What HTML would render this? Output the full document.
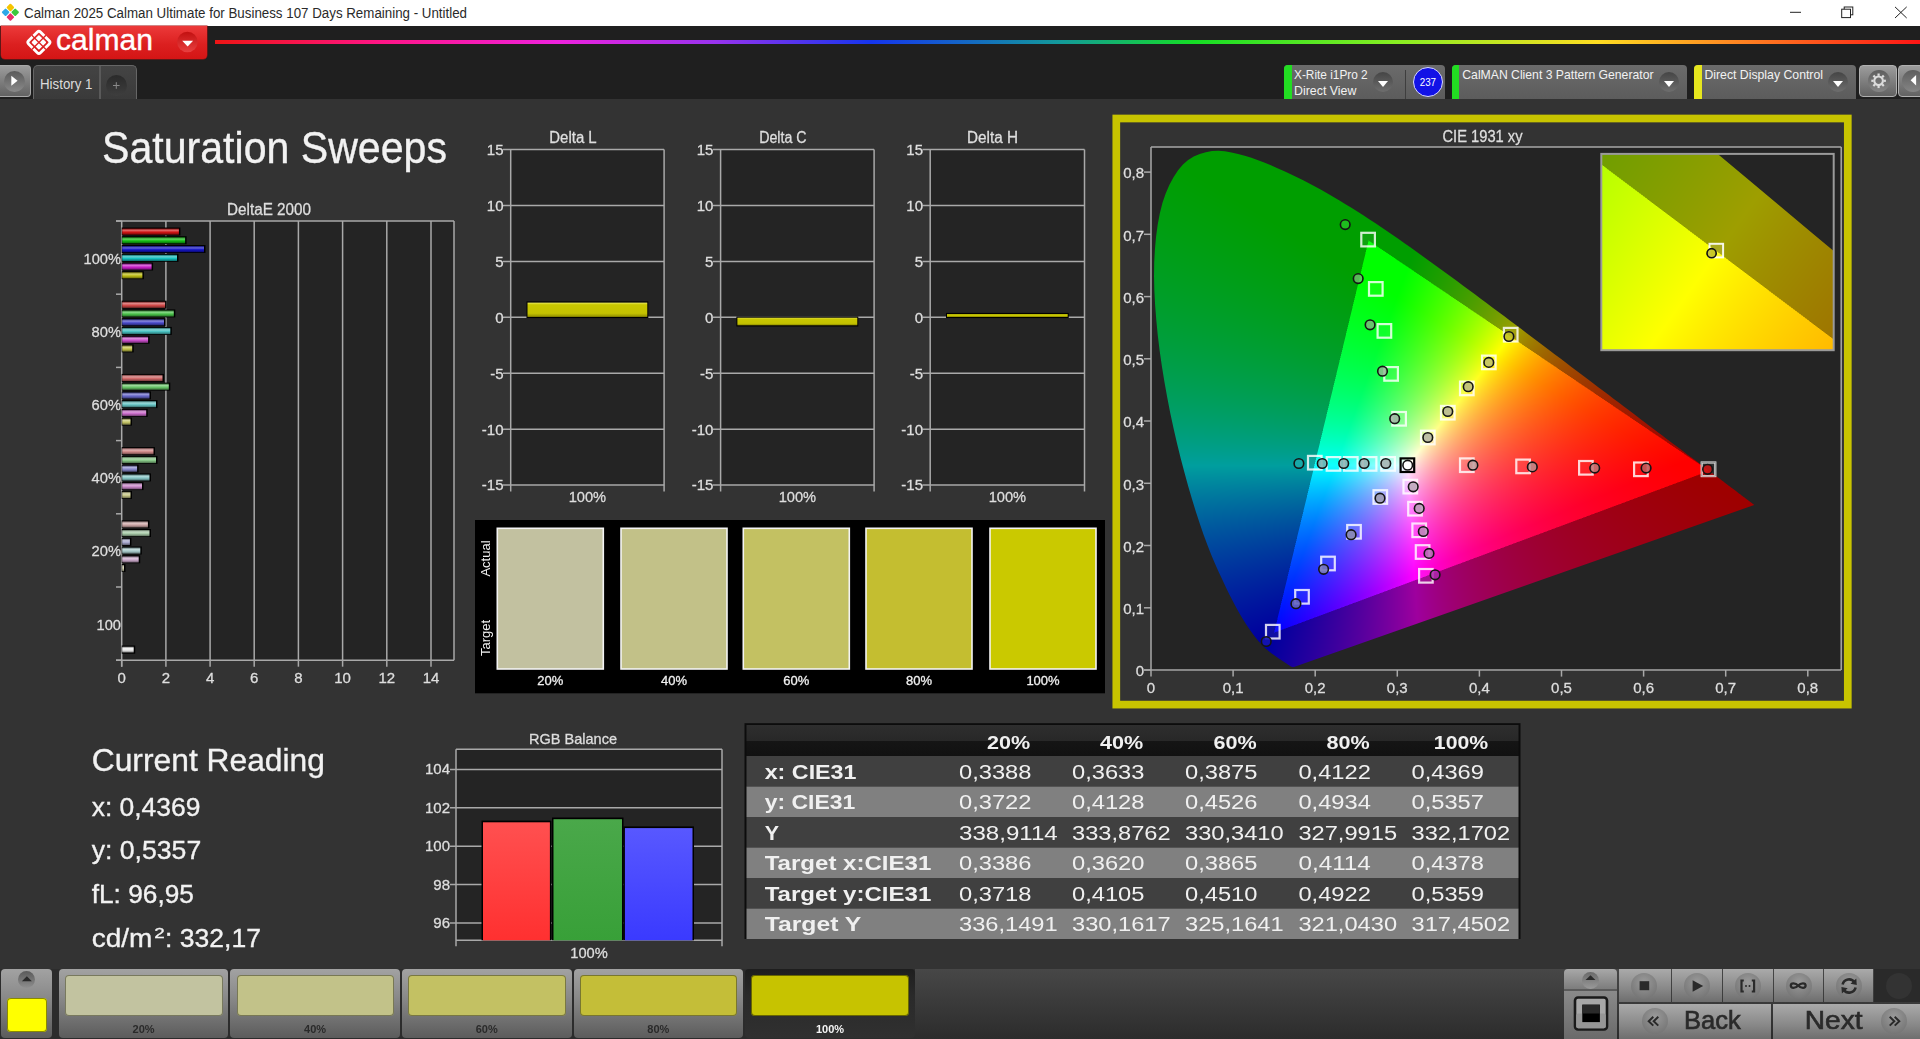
<!DOCTYPE html>
<html><head><meta charset="utf-8"><title>Calman</title>
<style>
*{margin:0;padding:0;box-sizing:border-box}
html,body{width:1920px;height:1039px;overflow:hidden;background:#333333;font-family:"Liberation Sans", sans-serif}
.a{position:absolute}
#title{left:0;top:0;width:1920px;height:25.5px;background:#fff}
#hdr{left:0;top:25.5px;width:1920px;height:73.5px;background:#1f1f1f}
#main{left:0;top:99px;width:1920px;height:870px;background:#333333}
svg text{font-family:"Liberation Sans", sans-serif}
.btn{background:linear-gradient(#9c9c9c,#626262);border-radius:4px}
.dd{position:absolute;width:20px;height:20px;border-radius:50%;background:linear-gradient(#454545,#6e6e6e)}
.dd:after{content:"";position:absolute;left:4.8px;top:8.5px;border-left:5.2px solid transparent;border-right:5.2px solid transparent;border-top:6px solid #fff}
.dev{position:absolute;top:65px;height:34px;border-radius:4px 4px 0 0;background:linear-gradient(#6b6b6b,#5c5c5c)}
.bar{position:absolute;left:0;top:0;width:8px;height:34px;border-radius:4px 0 0 0}
.devt{position:absolute;color:#f0f0f0;font-size:13px;white-space:nowrap;transform-origin:0 0}
.tb{position:absolute;top:969px;height:68.5px;border-radius:4px;background:linear-gradient(#a2a2a2 0%,#8a8a8a 40%,#5c5c5c 100%)}
.tsw{position:absolute;left:6.3px;top:6px;width:157.5px;height:40.6px;border-radius:4px;box-shadow:inset 0 0 0 1px rgba(60,60,40,0.55)}
.tl{position:absolute;left:0;width:100%;top:53.5px;text-align:center;font-size:11px;font-weight:bold;color:#2a2a2a}
.rb{position:absolute;background:linear-gradient(#aaaaaa,#888888 60%,#6e6e6e);}
.rc{position:absolute;width:26px;height:26px;border-radius:50%;background:radial-gradient(circle at 50% 35%,#9a9a9a,#7a7a7a 70%,#6a6a6a)}
</style></head><body>
<div id="title" class="a">
 <svg class="a" style="left:0;top:0" width="300" height="25">
<rect x="7.5" y="4.6" width="5.8" height="5.8" rx="1" transform="rotate(45 10.4 7.5)" fill="#f5c400"/>
  <rect x="2.7" y="9.4" width="5.8" height="5.8" rx="1" transform="rotate(45 5.6 12.3)" fill="#2fa8e8"/>
  <rect x="12.3" y="9.4" width="5.8" height="5.8" rx="1" transform="rotate(45 15.2 12.3)" fill="#3cc83c"/>
  <rect x="7.5" y="14.2" width="5.8" height="5.8" rx="1" transform="rotate(45 10.4 17.1)" fill="#e8306a"/>
 </svg>
 <svg class="a" style="left:0;top:0" width="600" height="25"><text x="24" y="17.7" font-size="13.8" fill="#2a2a2a" textLength="443" lengthAdjust="spacingAndGlyphs">Calman 2025 Calman Ultimate for Business 107 Days Remaining  - Untitled</text></svg>
 <svg class="a" style="left:1780px;top:0" width="140" height="25">
  <line x1="10" y1="12.3" x2="21" y2="12.3" stroke="#222" stroke-width="1"/>
  <rect x="64.2" y="7" width="8.6" height="7.8" fill="none" stroke="#222" stroke-width="1"/>
  <rect x="61.7" y="9.2" width="8.8" height="8.4" fill="#fff" stroke="#222" stroke-width="1"/>
  <line x1="115" y1="6.9" x2="126.7" y2="18" stroke="#222" stroke-width="1"/>
  <line x1="126.7" y1="6.9" x2="115" y2="18" stroke="#222" stroke-width="1"/>
 </svg>
</div>
<div id="hdr" class="a">
 <div class="a" style="left:1px;top:0.5px;width:206px;height:33px;border-radius:0 0 4px 4px;background:linear-gradient(#ec3a3a,#dc2020 55%,#d41515);box-shadow:0 0 0 0.5px #a01010"></div>
 <svg class="a" style="left:0;top:0" width="215" height="40">
  <g transform="translate(38.9 16.35) rotate(45)">
   <rect x="-8.4" y="-8.4" width="16.8" height="16.8" rx="2.2" fill="none" stroke="#fff" stroke-width="2.8"/>
   <rect x="-5.3" y="-5.3" width="10.6" height="10.6" rx="0.8" fill="#fff"/>
   <line x1="0" y1="-10" x2="0" y2="10" stroke="#dc2222" stroke-width="1.3"/>
   <line x1="-10" y1="0" x2="10" y2="0" stroke="#dc2222" stroke-width="1.3"/>
  </g>
  <text x="56" y="24" font-size="29" fill="#fff" stroke="#fff" stroke-width="0.35" textLength="97" lengthAdjust="spacingAndGlyphs">calman</text>
  <defs><linearGradient id="ddr" x1="0" y1="0" x2="0" y2="1"><stop offset="0" stop-color="#c21010"/><stop offset="1" stop-color="#e84040"/></linearGradient></defs>
  <circle cx="187.4" cy="16" r="10.3" fill="url(#ddr)"/>
  <path d="M182.2 14.8 L193.1 14.8 L187.65 20.5 Z" fill="#fff"/>
 </svg>
 <div class="a" style="left:215px;top:14.5px;width:1705px;height:4px;background:linear-gradient(90deg,#ee1515 0%,#ff1585 9.6%,#ee22dd 20.1%,#9933ee 29.3%,#1535ee 38.5%,#139a9a 49.6%,#15dd25 57.4%,#88ee22 69.3%,#ffdd22 81.1%,#ff8822 89%,#ff1515 100%)"></div>
 <!-- tabs -->
 <div class="a btn" style="left:0;top:39.5px;width:30.6px;height:32px;border:1px solid #a8a8a8;border-left:none;border-radius:0 4px 4px 0"></div>
 <div class="a" style="left:3.8px;top:45px;width:21.2px;height:21.2px;border-radius:50%;background:linear-gradient(#5a5a5a,#8a8a8a)"></div>
 <svg class="a" style="left:0;top:39.5px" width="30" height="32"><path d="M11.3 10.8 L11.3 20.8 L17.6 15.8 Z" fill="#fff"/></svg>
 <div class="a" style="left:33px;top:39.5px;width:104px;height:34px;border-radius:5px 5px 0 0;background:linear-gradient(#444,#3a3a3a);border:1.5px solid #666;border-bottom:none"></div>
 <div class="a" style="left:98.6px;top:40px;width:2px;height:33.5px;background:#5a5a5a"></div>
 <div class="a" style="left:105.6px;top:49px;width:21.2px;height:21.2px;border-radius:50%;background:linear-gradient(#2a2a2a,#3e3e3e)"></div>
 <svg class="a" style="left:0;top:0" width="140" height="74">
  <text x="40" y="62.6" font-size="14.5" fill="#dcdcdc" textLength="52.5" lengthAdjust="spacingAndGlyphs">History 1</text>
  <line x1="113" y1="59.5" x2="119.6" y2="59.5" stroke="#8a8a8a" stroke-width="1"/>
  <line x1="116.3" y1="56.2" x2="116.3" y2="62.8" stroke="#8a8a8a" stroke-width="1"/>
 </svg>
 <!-- device boxes -->
 <div class="dev" style="left:1283.8px;width:161.2px;top:39.5px"><div class="bar" style="background:#22dd22"></div></div>
 <div class="a" style="left:1404.5px;top:44px;width:1.5px;height:29.5px;background:#3e3e3e"></div>
 <div class="dd" style="left:1372.8px;top:46.5px"></div>
 <div class="a" style="left:1412.9px;top:41.1px;width:30px;height:30px;border-radius:50%;background:#1212e6;border:1.5px solid #d8d8ff"></div>
 <div class="dev" style="left:1451.8px;width:235px;top:39.5px"><div class="bar" style="background:#22dd22;width:7.4px"></div></div>
 <div class="dd" style="left:1659.1px;top:46.8px"></div>
 <div class="dev" style="left:1694.2px;width:162px;top:39.5px"><div class="bar" style="background:#e6e61e;width:7.4px"></div></div>
 <div class="dd" style="left:1828px;top:46.8px"></div>
 <svg class="a" style="left:0;top:0" width="1920" height="74">
 </svg>
 <svg class="a" style="left:1280px;top:0" width="640" height="74">
  <text x="14" y="52.8" font-size="13" fill="#f2f2f2" textLength="73.7" lengthAdjust="spacingAndGlyphs">X-Rite i1Pro 2</text>
  <text x="14" y="69.2" font-size="13" fill="#f2f2f2" textLength="62.4" lengthAdjust="spacingAndGlyphs">Direct View</text>
  <text x="147.9" y="60.3" font-size="10.5" fill="#fff" text-anchor="middle" textLength="16.4" lengthAdjust="spacingAndGlyphs">237</text>
  <text x="182.3" y="52.8" font-size="13" fill="#f2f2f2" textLength="191.2" lengthAdjust="spacingAndGlyphs">CalMAN Client 3 Pattern Generator</text>
  <text x="424.4" y="52.8" font-size="13" fill="#f2f2f2" textLength="118.6" lengthAdjust="spacingAndGlyphs">Direct Display Control</text>
 </svg>
 <div class="a btn" style="left:1859px;top:39.7px;width:38px;height:32px;border:1px solid #b0b0b0"></div>
 <div class="a btn" style="left:1898px;top:39.7px;width:30px;height:32px;border:1px solid #b0b0b0"></div>
 <div class="a" style="left:1867.6px;top:44.3px;width:22px;height:22px;border-radius:50%;background:linear-gradient(#5e5e5e,#858585)"></div>
 <div class="a" style="left:1901.5px;top:44.3px;width:22px;height:22px;border-radius:50%;background:linear-gradient(#5e5e5e,#858585)"></div>
 <svg class="a" style="left:1860px;top:39.5px" width="60" height="34">
  <g transform="translate(18.6 15.8)" fill="none" stroke="#dcdcdc">
   <circle r="4.3" stroke-width="2.1"/>
   <g stroke-width="2.2" stroke-linecap="butt">
    <line x1="0" y1="-7.3" x2="0" y2="-5"/><line x1="0" y1="7.3" x2="0" y2="5"/>
    <line x1="-7.3" y1="0" x2="-5" y2="0"/><line x1="7.3" y1="0" x2="5" y2="0"/>
    <line x1="-5.2" y1="-5.2" x2="-3.5" y2="-3.5"/><line x1="5.2" y1="5.2" x2="3.5" y2="3.5"/>
    <line x1="-5.2" y1="5.2" x2="-3.5" y2="3.5"/><line x1="5.2" y1="-5.2" x2="3.5" y2="-3.5"/>
   </g>
  </g>
  <path d="M50.6 15.2 L56.1 9.9 L56.1 20.5 Z" fill="#fff"/>
 </svg>
</div>
<div id="main" class="a"></div>
<svg class="a" style="left:0;top:0" width="1920" height="1039">
<defs>
<linearGradient id="hsg" gradientUnits="userSpaceOnUse" x1="0" y1="153.4" x2="0" y2="670.0"><stop offset="0" stop-color="#009400"/><stop offset="0.45" stop-color="#00904a"/><stop offset="0.6" stop-color="#008c8c"/><stop offset="0.8" stop-color="#00409a"/><stop offset="1" stop-color="#1000a0"/></linearGradient>
<linearGradient id="fr" gradientUnits="userSpaceOnUse" x1="1709.3" y1="470.8" x2="1334.8" y2="380.7"><stop offset="0" stop-color="#ff0000"/><stop offset="0.62" stop-color="#ff0000"/><stop offset="1" stop-color="#000"/></linearGradient>
<linearGradient id="fg" gradientUnits="userSpaceOnUse" x1="1368.6" y1="240.5" x2="1485.2" y2="554.2"><stop offset="0" stop-color="#00ff00"/><stop offset="0.62" stop-color="#00ff00"/><stop offset="1" stop-color="#000"/></linearGradient>
<linearGradient id="fb" gradientUnits="userSpaceOnUse" x1="1274.2" y1="632.7" x2="1485.7" y2="319.7"><stop offset="0" stop-color="#0000ff"/><stop offset="0.62" stop-color="#0000ff"/><stop offset="1" stop-color="#000"/></linearGradient>
</defs>
<polygon points="1293.9,666.9 1293.9,666.9 1293.9,666.9 1293.9,666.9 1293.9,666.9 1293.9,666.9 1293.8,666.9 1293.8,666.9 1293.8,666.9 1293.7,666.9 1293.7,667.0 1293.7,667.0 1293.6,667.0 1293.6,666.9 1293.6,666.9 1293.5,667.0 1293.5,667.0 1293.4,667.0 1293.4,667.0 1293.3,667.0 1293.3,667.0 1293.2,667.0 1293.2,667.0 1293.1,667.0 1293.1,667.0 1293.0,667.0 1293.0,667.0 1292.9,667.0 1292.8,667.0 1292.8,667.0 1292.7,667.0 1292.6,667.0 1292.6,667.0 1292.5,667.0 1292.4,667.0 1292.3,667.0 1292.2,667.0 1292.1,667.0 1292.0,666.9 1291.9,666.9 1291.7,666.8 1291.6,666.8 1291.4,666.7 1291.2,666.6 1291.0,666.5 1290.8,666.4 1290.6,666.3 1290.4,666.2 1290.2,666.0 1289.9,665.9 1289.7,665.7 1289.4,665.5 1289.1,665.3 1288.7,665.1 1288.4,664.9 1288.0,664.6 1287.7,664.4 1287.3,664.1 1286.9,663.8 1286.4,663.5 1286.0,663.2 1285.5,662.9 1285.0,662.6 1284.4,662.2 1283.9,661.8 1283.3,661.4 1282.6,661.0 1281.9,660.5 1281.2,660.0 1280.4,659.5 1279.6,659.0 1278.7,658.4 1277.8,657.8 1276.9,657.2 1276.0,656.6 1275.0,655.9 1273.9,655.1 1272.8,654.3 1271.7,653.5 1270.5,652.5 1269.2,651.5 1267.9,650.4 1266.6,649.3 1265.3,648.1 1263.8,646.8 1262.2,645.2 1260.6,643.4 1258.8,641.4 1256.9,639.2 1255.0,636.8 1252.9,634.0 1250.7,631.0 1248.5,627.8 1246.1,624.3 1243.6,620.4 1241.0,616.0 1238.2,611.2 1235.4,606.0 1232.4,600.3 1229.2,594.2 1226.0,587.4 1222.5,580.1 1218.8,572.3 1215.0,563.9 1211.2,554.8 1207.4,545.1 1203.6,534.6 1199.7,523.5 1195.9,511.7 1192.0,499.3 1188.3,486.4 1184.5,472.8 1180.7,458.4 1177.0,443.5 1173.5,428.3 1170.3,413.1 1167.3,397.7 1164.4,381.9 1161.8,366.0 1159.6,350.3 1157.7,334.9 1156.3,319.8 1155.1,304.9 1154.3,290.2 1154.0,276.0 1154.2,262.5 1154.9,249.4 1156.0,236.8 1157.7,224.7 1159.8,213.4 1162.4,203.1 1165.6,193.6 1169.3,185.0 1173.5,177.2 1178.1,170.4 1182.9,164.6 1188.1,160.0 1193.8,156.5 1199.7,154.0 1205.8,152.2 1212.0,151.0 1218.3,150.7 1224.8,151.2 1231.4,152.4 1238.1,154.0 1244.8,155.8 1251.4,157.8 1258.1,160.1 1264.8,162.8 1271.5,165.6 1278.0,168.4 1284.4,171.2 1290.7,174.2 1297.0,177.2 1303.2,180.3 1309.4,183.5 1315.5,186.8 1321.5,190.1 1327.5,193.5 1333.5,197.0 1339.5,200.5 1345.5,204.1 1351.4,207.8 1357.4,211.6 1363.3,215.4 1369.2,219.2 1375.1,223.1 1381.0,227.0 1386.9,231.0 1392.7,235.1 1398.6,239.1 1404.5,243.2 1410.3,247.3 1416.2,251.5 1422.1,255.7 1427.9,259.9 1433.8,264.1 1439.7,268.4 1445.6,272.7 1451.4,277.0 1457.3,281.3 1463.2,285.6 1469.0,290.0 1474.9,294.3 1480.7,298.7 1486.5,303.0 1492.4,307.4 1498.2,311.7 1504.0,316.1 1509.8,320.4 1515.6,324.8 1521.4,329.1 1527.1,333.4 1532.8,337.7 1538.5,342.0 1544.1,346.2 1549.7,350.5 1555.3,354.7 1560.8,358.9 1566.3,363.0 1571.8,367.1 1577.2,371.2 1582.5,375.3 1587.8,379.3 1593.1,383.3 1598.3,387.2 1603.4,391.0 1608.5,394.9 1613.5,398.6 1618.4,402.3 1623.2,406.0 1628.0,409.6 1632.6,413.1 1637.2,416.6 1641.7,419.9 1646.0,423.2 1650.2,426.4 1654.2,429.4 1658.2,432.4 1662.0,435.3 1665.8,438.2 1669.4,440.9 1673.0,443.6 1676.5,446.3 1679.9,448.8 1683.2,451.3 1686.3,453.6 1689.3,455.9 1692.2,458.0 1695.0,460.1 1697.6,462.1 1700.2,464.1 1702.6,465.9 1705.0,467.7 1707.2,469.4 1709.4,471.0 1711.4,472.6 1713.4,474.1 1715.2,475.5 1717.0,476.8 1718.7,478.1 1720.4,479.3 1721.9,480.5 1723.4,481.6 1724.8,482.7 1726.2,483.7 1727.5,484.7 1728.7,485.6 1729.9,486.5 1731.1,487.4 1732.2,488.3 1733.3,489.1 1734.3,489.9 1735.3,490.6 1736.3,491.4 1737.2,492.1 1738.1,492.7 1738.9,493.4 1739.8,494.0 1740.5,494.6 1741.3,495.2 1742.0,495.7 1742.7,496.2 1743.4,496.7 1744.0,497.2 1744.6,497.6 1745.1,498.0 1745.7,498.4 1746.1,498.8 1746.6,499.1 1747.0,499.5 1747.5,499.8 1747.9,500.1 1748.2,500.4 1748.6,500.6 1748.9,500.9 1749.3,501.1 1749.6,501.4 1749.8,501.6 1750.1,501.8 1750.3,502.0 1750.5,502.1 1750.7,502.3 1750.9,502.4 1751.1,502.5 1751.2,502.6 1751.4,502.8 1751.5,502.9 1751.7,503.0 1751.8,503.1 1752.0,503.2 1752.1,503.3 1752.2,503.4 1752.3,503.5 1752.4,503.5 1752.5,503.6 1752.7,503.7 1752.8,503.8 1752.9,503.9 1753.0,504.0 1753.1,504.1 1753.2,504.1 1753.3,504.2 1753.4,504.3 1753.5,504.4 1753.6,504.4 1753.7,504.5 1753.8,504.6 1753.8,504.6 1753.9,504.7 1753.9,504.7 1754.0,504.7 1754.0,504.8 1754.1,504.8 1754.1,504.8 1754.1,504.8 1754.1,504.8 1754.1,504.8 1754.2,504.9 1754.2,504.9 1754.2,504.9" fill="url(#hsg)"/>
<linearGradient id="tng" gradientUnits="userSpaceOnUse" x1="1274.2" y1="0" x2="1754.2" y2="0"><stop offset="0" stop-color="#1a009a"/><stop offset="0.45" stop-color="#6a0090"/><stop offset="1" stop-color="#9a0010"/></linearGradient>
<linearGradient id="bdg" gradientUnits="userSpaceOnUse" x1="1368.6" y1="0" x2="1709.3" y2="0"><stop offset="0" stop-color="#10a000"/><stop offset="0.5" stop-color="#8a9a00"/><stop offset="1" stop-color="#9a2000"/></linearGradient>
<polygon points="1293.9,666.9 1274.2,632.7 1709.3,470.8 1754.2,504.9" fill="url(#tng)"/>
<polygon points="1369.2,219.2 1375.1,223.1 1381.0,227.0 1386.9,231.0 1392.7,235.1 1398.6,239.1 1404.5,243.2 1410.3,247.3 1416.2,251.5 1422.1,255.7 1427.9,259.9 1433.8,264.1 1439.7,268.4 1445.6,272.7 1451.4,277.0 1457.3,281.3 1463.2,285.6 1469.0,290.0 1474.9,294.3 1480.7,298.7 1486.5,303.0 1492.4,307.4 1498.2,311.7 1504.0,316.1 1509.8,320.4 1515.6,324.8 1521.4,329.1 1527.1,333.4 1532.8,337.7 1538.5,342.0 1544.1,346.2 1549.7,350.5 1555.3,354.7 1560.8,358.9 1566.3,363.0 1571.8,367.1 1577.2,371.2 1582.5,375.3 1587.8,379.3 1593.1,383.3 1598.3,387.2 1603.4,391.0 1608.5,394.9 1613.5,398.6 1618.4,402.3 1623.2,406.0 1628.0,409.6 1632.6,413.1 1637.2,416.6 1641.7,419.9 1646.0,423.2 1650.2,426.4 1654.2,429.4 1658.2,432.4 1662.0,435.3 1665.8,438.2 1669.4,440.9 1673.0,443.6 1676.5,446.3 1679.9,448.8 1683.2,451.3 1686.3,453.6 1689.3,455.9 1692.2,458.0 1695.0,460.1 1697.6,462.1 1700.2,464.1 1702.6,465.9 1705.0,467.7 1707.2,469.4 1709.4,471.0 1711.4,472.6 1713.4,474.1 1715.2,475.5 1717.0,476.8 1718.7,478.1 1720.4,479.3 1721.9,480.5 1723.4,481.6 1724.8,482.7 1726.2,483.7 1727.5,484.7 1728.7,485.6 1729.9,486.5 1731.1,487.4 1732.2,488.3 1733.3,489.1 1734.3,489.9 1735.3,490.6 1736.3,491.4 1737.2,492.1 1738.1,492.7 1738.9,493.4 1739.8,494.0 1740.5,494.6 1741.3,495.2 1742.0,495.7 1742.7,496.2 1743.4,496.7 1744.0,497.2 1744.6,497.6 1745.1,498.0 1745.7,498.4 1746.1,498.8 1746.6,499.1 1747.0,499.5 1747.5,499.8 1747.9,500.1 1748.2,500.4 1748.6,500.6 1748.9,500.9 1749.3,501.1 1749.6,501.4 1749.8,501.6 1750.1,501.8 1750.3,502.0 1750.5,502.1 1750.7,502.3 1750.9,502.4 1751.1,502.5 1751.2,502.6 1751.4,502.8 1751.5,502.9 1751.7,503.0 1751.8,503.1 1752.0,503.2 1752.1,503.3 1752.2,503.4 1752.3,503.5 1752.4,503.5 1752.5,503.6 1752.7,503.7 1752.8,503.8 1752.9,503.9 1753.0,504.0 1753.1,504.1 1753.2,504.1 1753.3,504.2 1753.4,504.3 1753.5,504.4 1753.6,504.4 1753.7,504.5 1753.8,504.6 1753.8,504.6 1753.9,504.7 1753.9,504.7 1754.0,504.7 1754.0,504.8 1754.1,504.8 1754.1,504.8 1754.1,504.8 1754.1,504.8 1754.1,504.8 1754.2,504.9 1754.2,504.9 1754.2,504.9 1709.3,470.8 1368.6,240.5" fill="url(#bdg)"/>
<g style="isolation:isolate"><polygon points="1709.3,470.8 1368.6,240.5 1274.2,632.7" fill="#000"/>
<polygon points="1709.3,470.8 1368.6,240.5 1274.2,632.7" fill="url(#fr)" style="mix-blend-mode:screen"/>
<polygon points="1709.3,470.8 1368.6,240.5 1274.2,632.7" fill="url(#fg)" style="mix-blend-mode:screen"/>
<polygon points="1709.3,470.8 1368.6,240.5 1274.2,632.7" fill="url(#fb)" style="mix-blend-mode:screen"/>
</g>
<linearGradient id="ibd" x1="0" y1="0" x2="1" y2="1"><stop offset="0" stop-color="#5a9200"/><stop offset="1" stop-color="#8a6a00"/></linearGradient>
<linearGradient id="iin" x1="0" y1="0" x2="1" y2="1"><stop offset="0" stop-color="#b8ff00"/><stop offset="0.45" stop-color="#ffff00"/><stop offset="1" stop-color="#ffb400"/></linearGradient>
<rect x="1601" y="154" width="233" height="197" fill="#242424"/>
<polygon points="1601.3,154 1717.5,154 1834,251.3 1834,339.2 1601.3,164.1" fill="url(#ibd)"/>
<polygon points="1601.3,164.1 1834,339.2 1834,350.2 1601.3,350.2" fill="url(#iin)"/>
</svg>
<canvas id="cie" class="a" width="691" height="524" style="left:1151px;top:147px;width:691px;height:524px"></canvas>
<canvas id="ins" class="a" width="233" height="197" style="left:1601px;top:154px;width:233px;height:197px"></canvas>
<svg class="a" style="left:0;top:0" width="1920" height="1039">
<defs><linearGradient id="bg1" x1="0" y1="0" x2="0" y2="1"><stop offset="0" stop-color="rgb(116, 11, 11)"/><stop offset="0.3" stop-color="rgb(226, 102, 102)"/><stop offset="0.6" stop-color="rgb(210, 20, 20)"/><stop offset="1" stop-color="rgb(116, 11, 11)"/></linearGradient><linearGradient id="bg2" x1="0" y1="0" x2="0" y2="1"><stop offset="0" stop-color="rgb(11, 105, 11)"/><stop offset="0.3" stop-color="rgb(102, 213, 102)"/><stop offset="0.6" stop-color="rgb(20, 190, 20)"/><stop offset="1" stop-color="rgb(11, 105, 11)"/></linearGradient><linearGradient id="bg3" x1="0" y1="0" x2="0" y2="1"><stop offset="0" stop-color="rgb(11, 11, 110)"/><stop offset="0.3" stop-color="rgb(102, 102, 219)"/><stop offset="0.6" stop-color="rgb(20, 20, 200)"/><stop offset="1" stop-color="rgb(11, 11, 110)"/></linearGradient><linearGradient id="bg4" x1="0" y1="0" x2="0" y2="1"><stop offset="0" stop-color="rgb(11, 105, 105)"/><stop offset="0.3" stop-color="rgb(102, 213, 213)"/><stop offset="0.6" stop-color="rgb(20, 190, 190)"/><stop offset="1" stop-color="rgb(11, 105, 105)"/></linearGradient><linearGradient id="bg5" x1="0" y1="0" x2="0" y2="1"><stop offset="0" stop-color="rgb(110, 16, 110)"/><stop offset="0.3" stop-color="rgb(219, 109, 219)"/><stop offset="0.6" stop-color="rgb(200, 30, 200)"/><stop offset="1" stop-color="rgb(110, 16, 110)"/></linearGradient><linearGradient id="bg6" x1="0" y1="0" x2="0" y2="1"><stop offset="0" stop-color="rgb(105, 105, 11)"/><stop offset="0.3" stop-color="rgb(213, 213, 102)"/><stop offset="0.6" stop-color="rgb(190, 190, 20)"/><stop offset="1" stop-color="rgb(105, 105, 11)"/></linearGradient><linearGradient id="bg7" x1="0" y1="0" x2="0" y2="1"><stop offset="0" stop-color="rgb(115, 40, 40)"/><stop offset="0.3" stop-color="rgb(225, 136, 136)"/><stop offset="0.6" stop-color="rgb(209, 72, 72)"/><stop offset="1" stop-color="rgb(115, 40, 40)"/></linearGradient><linearGradient id="bg8" x1="0" y1="0" x2="0" y2="1"><stop offset="0" stop-color="rgb(40, 107, 40)"/><stop offset="0.3" stop-color="rgb(136, 215, 136)"/><stop offset="0.6" stop-color="rgb(72, 194, 72)"/><stop offset="1" stop-color="rgb(40, 107, 40)"/></linearGradient><linearGradient id="bg9" x1="0" y1="0" x2="0" y2="1"><stop offset="0" stop-color="rgb(40, 40, 111)"/><stop offset="0.3" stop-color="rgb(136, 136, 220)"/><stop offset="0.6" stop-color="rgb(72, 72, 201)"/><stop offset="1" stop-color="rgb(40, 40, 111)"/></linearGradient><linearGradient id="bg10" x1="0" y1="0" x2="0" y2="1"><stop offset="0" stop-color="rgb(40, 107, 107)"/><stop offset="0.3" stop-color="rgb(136, 215, 215)"/><stop offset="0.6" stop-color="rgb(72, 194, 194)"/><stop offset="1" stop-color="rgb(40, 107, 107)"/></linearGradient><linearGradient id="bg11" x1="0" y1="0" x2="0" y2="1"><stop offset="0" stop-color="rgb(111, 43, 111)"/><stop offset="0.3" stop-color="rgb(220, 141, 220)"/><stop offset="0.6" stop-color="rgb(201, 79, 201)"/><stop offset="1" stop-color="rgb(111, 43, 111)"/></linearGradient><linearGradient id="bg12" x1="0" y1="0" x2="0" y2="1"><stop offset="0" stop-color="rgb(107, 107, 40)"/><stop offset="0.3" stop-color="rgb(215, 215, 136)"/><stop offset="0.6" stop-color="rgb(194, 194, 72)"/><stop offset="1" stop-color="rgb(107, 107, 40)"/></linearGradient><linearGradient id="bg13" x1="0" y1="0" x2="0" y2="1"><stop offset="0" stop-color="rgb(114, 57, 57)"/><stop offset="0.3" stop-color="rgb(224, 156, 156)"/><stop offset="0.6" stop-color="rgb(208, 103, 103)"/><stop offset="1" stop-color="rgb(114, 57, 57)"/></linearGradient><linearGradient id="bg14" x1="0" y1="0" x2="0" y2="1"><stop offset="0" stop-color="rgb(57, 108, 57)"/><stop offset="0.3" stop-color="rgb(156, 217, 156)"/><stop offset="0.6" stop-color="rgb(103, 197, 103)"/><stop offset="1" stop-color="rgb(57, 108, 57)"/></linearGradient><linearGradient id="bg15" x1="0" y1="0" x2="0" y2="1"><stop offset="0" stop-color="rgb(57, 57, 111)"/><stop offset="0.3" stop-color="rgb(156, 156, 221)"/><stop offset="0.6" stop-color="rgb(103, 103, 202)"/><stop offset="1" stop-color="rgb(57, 57, 111)"/></linearGradient><linearGradient id="bg16" x1="0" y1="0" x2="0" y2="1"><stop offset="0" stop-color="rgb(57, 108, 108)"/><stop offset="0.3" stop-color="rgb(156, 217, 217)"/><stop offset="0.6" stop-color="rgb(103, 197, 197)"/><stop offset="1" stop-color="rgb(57, 108, 108)"/></linearGradient><linearGradient id="bg17" x1="0" y1="0" x2="0" y2="1"><stop offset="0" stop-color="rgb(111, 60, 111)"/><stop offset="0.3" stop-color="rgb(221, 160, 221)"/><stop offset="0.6" stop-color="rgb(202, 109, 202)"/><stop offset="1" stop-color="rgb(111, 60, 111)"/></linearGradient><linearGradient id="bg18" x1="0" y1="0" x2="0" y2="1"><stop offset="0" stop-color="rgb(108, 108, 57)"/><stop offset="0.3" stop-color="rgb(217, 217, 156)"/><stop offset="0.6" stop-color="rgb(197, 197, 103)"/><stop offset="1" stop-color="rgb(108, 108, 57)"/></linearGradient><linearGradient id="bg19" x1="0" y1="0" x2="0" y2="1"><stop offset="0" stop-color="rgb(114, 74, 74)"/><stop offset="0.3" stop-color="rgb(224, 177, 177)"/><stop offset="0.6" stop-color="rgb(207, 135, 135)"/><stop offset="1" stop-color="rgb(114, 74, 74)"/></linearGradient><linearGradient id="bg20" x1="0" y1="0" x2="0" y2="1"><stop offset="0" stop-color="rgb(74, 109, 74)"/><stop offset="0.3" stop-color="rgb(177, 219, 177)"/><stop offset="0.6" stop-color="rgb(135, 199, 135)"/><stop offset="1" stop-color="rgb(74, 109, 74)"/></linearGradient><linearGradient id="bg21" x1="0" y1="0" x2="0" y2="1"><stop offset="0" stop-color="rgb(74, 74, 112)"/><stop offset="0.3" stop-color="rgb(177, 177, 221)"/><stop offset="0.6" stop-color="rgb(135, 135, 203)"/><stop offset="1" stop-color="rgb(74, 74, 112)"/></linearGradient><linearGradient id="bg22" x1="0" y1="0" x2="0" y2="1"><stop offset="0" stop-color="rgb(74, 109, 109)"/><stop offset="0.3" stop-color="rgb(177, 219, 219)"/><stop offset="0.6" stop-color="rgb(135, 199, 199)"/><stop offset="1" stop-color="rgb(74, 109, 109)"/></linearGradient><linearGradient id="bg23" x1="0" y1="0" x2="0" y2="1"><stop offset="0" stop-color="rgb(112, 76, 112)"/><stop offset="0.3" stop-color="rgb(221, 179, 221)"/><stop offset="0.6" stop-color="rgb(203, 138, 203)"/><stop offset="1" stop-color="rgb(112, 76, 112)"/></linearGradient><linearGradient id="bg24" x1="0" y1="0" x2="0" y2="1"><stop offset="0" stop-color="rgb(109, 109, 74)"/><stop offset="0.3" stop-color="rgb(219, 219, 177)"/><stop offset="0.6" stop-color="rgb(199, 199, 135)"/><stop offset="1" stop-color="rgb(109, 109, 74)"/></linearGradient><linearGradient id="bg25" x1="0" y1="0" x2="0" y2="1"><stop offset="0" stop-color="rgb(113, 92, 92)"/><stop offset="0.3" stop-color="rgb(223, 198, 198)"/><stop offset="0.6" stop-color="rgb(206, 168, 168)"/><stop offset="1" stop-color="rgb(113, 92, 92)"/></linearGradient><linearGradient id="bg26" x1="0" y1="0" x2="0" y2="1"><stop offset="0" stop-color="rgb(92, 111, 92)"/><stop offset="0.3" stop-color="rgb(198, 221, 198)"/><stop offset="0.6" stop-color="rgb(168, 202, 168)"/><stop offset="1" stop-color="rgb(92, 111, 92)"/></linearGradient><linearGradient id="bg27" x1="0" y1="0" x2="0" y2="1"><stop offset="0" stop-color="rgb(92, 92, 112)"/><stop offset="0.3" stop-color="rgb(198, 198, 222)"/><stop offset="0.6" stop-color="rgb(168, 168, 204)"/><stop offset="1" stop-color="rgb(92, 92, 112)"/></linearGradient><linearGradient id="bg28" x1="0" y1="0" x2="0" y2="1"><stop offset="0" stop-color="rgb(92, 111, 111)"/><stop offset="0.3" stop-color="rgb(198, 221, 221)"/><stop offset="0.6" stop-color="rgb(168, 202, 202)"/><stop offset="1" stop-color="rgb(92, 111, 111)"/></linearGradient><linearGradient id="bg29" x1="0" y1="0" x2="0" y2="1"><stop offset="0" stop-color="rgb(112, 94, 112)"/><stop offset="0.3" stop-color="rgb(222, 200, 222)"/><stop offset="0.6" stop-color="rgb(204, 170, 204)"/><stop offset="1" stop-color="rgb(112, 94, 112)"/></linearGradient><linearGradient id="bg30" x1="0" y1="0" x2="0" y2="1"><stop offset="0" stop-color="rgb(111, 111, 92)"/><stop offset="0.3" stop-color="rgb(221, 221, 198)"/><stop offset="0.6" stop-color="rgb(202, 202, 168)"/><stop offset="1" stop-color="rgb(111, 111, 92)"/></linearGradient><linearGradient id="bg31" x1="0" y1="0" x2="0" y2="1"><stop offset="0" stop-color="rgb(129, 129, 129)"/><stop offset="0.3" stop-color="rgb(242, 242, 242)"/><stop offset="0.6" stop-color="rgb(235, 235, 235)"/><stop offset="1" stop-color="rgb(129, 129, 129)"/></linearGradient><linearGradient id="ylg0" x1="0" y1="0" x2="0" y2="1"><stop offset="0" stop-color="#ecec60"/><stop offset="0.15" stop-color="#c9c700"/><stop offset="0.75" stop-color="#c4c200"/><stop offset="1" stop-color="#8e8c00"/></linearGradient><linearGradient id="ylg1" x1="0" y1="0" x2="0" y2="1"><stop offset="0" stop-color="#ecec60"/><stop offset="0.15" stop-color="#c9c700"/><stop offset="0.75" stop-color="#c4c200"/><stop offset="1" stop-color="#8e8c00"/></linearGradient><linearGradient id="ylg2" x1="0" y1="0" x2="0" y2="1"><stop offset="0" stop-color="#ecec60"/><stop offset="0.15" stop-color="#c9c700"/><stop offset="0.75" stop-color="#c4c200"/><stop offset="1" stop-color="#8e8c00"/></linearGradient><linearGradient id="rbr" x1="0" y1="0" x2="0" y2="1"><stop offset="0" stop-color="#ff5050"/><stop offset="1" stop-color="#ff3030"/></linearGradient><linearGradient id="rbg" x1="0" y1="0" x2="0" y2="1"><stop offset="0" stop-color="#4aa84a"/><stop offset="1" stop-color="#38a038"/></linearGradient><linearGradient id="rbb" x1="0" y1="0" x2="0" y2="1"><stop offset="0" stop-color="#5858ff"/><stop offset="1" stop-color="#3a3aff"/></linearGradient><linearGradient id="thg" x1="0" y1="0" x2="0" y2="1"><stop offset="0" stop-color="#2e2e2e"/><stop offset="0.5" stop-color="#282828"/><stop offset="0.5" stop-color="#151515"/><stop offset="1" stop-color="#111111"/></linearGradient></defs>
<text x="102.0" y="162.5" font-size="43.6" fill="#f2f2f2" textLength="345.0" lengthAdjust="spacingAndGlyphs" stroke="#f2f2f2" stroke-width="0.35">Saturation Sweeps</text>
<text x="269.0" y="215.0" font-size="16" fill="#dedede" text-anchor="middle" textLength="84.0" lengthAdjust="spacingAndGlyphs" stroke="#dedede" stroke-width="0.3">DeltaE 2000</text>
<rect x="121.7" y="221.0" width="332.3" height="439.2" fill="#242424"/>
<line x1="165.9" y1="221.0" x2="165.9" y2="660.2" stroke="#a9a9a9" stroke-width="1.5"/>
<line x1="210.1" y1="221.0" x2="210.1" y2="660.2" stroke="#a9a9a9" stroke-width="1.5"/>
<line x1="254.2" y1="221.0" x2="254.2" y2="660.2" stroke="#a9a9a9" stroke-width="1.5"/>
<line x1="298.4" y1="221.0" x2="298.4" y2="660.2" stroke="#a9a9a9" stroke-width="1.5"/>
<line x1="342.6" y1="221.0" x2="342.6" y2="660.2" stroke="#a9a9a9" stroke-width="1.5"/>
<line x1="386.8" y1="221.0" x2="386.8" y2="660.2" stroke="#a9a9a9" stroke-width="1.5"/>
<line x1="431.0" y1="221.0" x2="431.0" y2="660.2" stroke="#a9a9a9" stroke-width="1.5"/>
<line x1="116.0" y1="221.0" x2="454.0" y2="221.0" stroke="#a9a9a9" stroke-width="1.5"/>
<line x1="454.0" y1="221.0" x2="454.0" y2="660.2" stroke="#a9a9a9" stroke-width="1.5"/>
<line x1="121.7" y1="221.0" x2="121.7" y2="666.7" stroke="#a9a9a9" stroke-width="1.5"/>
<line x1="116.0" y1="660.2" x2="454.0" y2="660.2" stroke="#a9a9a9" stroke-width="1.5"/>
<line x1="116.0" y1="221.0" x2="121.7" y2="221.0" stroke="#a9a9a9" stroke-width="1.5"/>
<line x1="116.0" y1="294.2" x2="121.7" y2="294.2" stroke="#a9a9a9" stroke-width="1.5"/>
<line x1="116.0" y1="367.4" x2="121.7" y2="367.4" stroke="#a9a9a9" stroke-width="1.5"/>
<line x1="116.0" y1="440.6" x2="121.7" y2="440.6" stroke="#a9a9a9" stroke-width="1.5"/>
<line x1="116.0" y1="513.8" x2="121.7" y2="513.8" stroke="#a9a9a9" stroke-width="1.5"/>
<line x1="116.0" y1="587.0" x2="121.7" y2="587.0" stroke="#a9a9a9" stroke-width="1.5"/>
<line x1="116.0" y1="660.2" x2="121.7" y2="660.2" stroke="#a9a9a9" stroke-width="1.5"/>
<line x1="121.7" y1="660.2" x2="121.7" y2="666.7" stroke="#a9a9a9" stroke-width="1.5"/>
<text x="121.7" y="683.3" font-size="15" fill="#dedede" text-anchor="middle" stroke="#dedede" stroke-width="0.3">0</text>
<line x1="165.9" y1="660.2" x2="165.9" y2="666.7" stroke="#a9a9a9" stroke-width="1.5"/>
<text x="165.9" y="683.3" font-size="15" fill="#dedede" text-anchor="middle" stroke="#dedede" stroke-width="0.3">2</text>
<line x1="210.1" y1="660.2" x2="210.1" y2="666.7" stroke="#a9a9a9" stroke-width="1.5"/>
<text x="210.1" y="683.3" font-size="15" fill="#dedede" text-anchor="middle" stroke="#dedede" stroke-width="0.3">4</text>
<line x1="254.2" y1="660.2" x2="254.2" y2="666.7" stroke="#a9a9a9" stroke-width="1.5"/>
<text x="254.2" y="683.3" font-size="15" fill="#dedede" text-anchor="middle" stroke="#dedede" stroke-width="0.3">6</text>
<line x1="298.4" y1="660.2" x2="298.4" y2="666.7" stroke="#a9a9a9" stroke-width="1.5"/>
<text x="298.4" y="683.3" font-size="15" fill="#dedede" text-anchor="middle" stroke="#dedede" stroke-width="0.3">8</text>
<line x1="342.6" y1="660.2" x2="342.6" y2="666.7" stroke="#a9a9a9" stroke-width="1.5"/>
<text x="342.6" y="683.3" font-size="15" fill="#dedede" text-anchor="middle" stroke="#dedede" stroke-width="0.3">10</text>
<line x1="386.8" y1="660.2" x2="386.8" y2="666.7" stroke="#a9a9a9" stroke-width="1.5"/>
<text x="386.8" y="683.3" font-size="15" fill="#dedede" text-anchor="middle" stroke="#dedede" stroke-width="0.3">12</text>
<line x1="431.0" y1="660.2" x2="431.0" y2="666.7" stroke="#a9a9a9" stroke-width="1.5"/>
<text x="431.0" y="683.3" font-size="15" fill="#dedede" text-anchor="middle" stroke="#dedede" stroke-width="0.3">14</text>
<text x="121.0" y="263.6" font-size="15.5" fill="#dedede" text-anchor="end" textLength="37.5" lengthAdjust="spacingAndGlyphs" stroke="#dedede" stroke-width="0.3">100%</text>
<text x="121.0" y="336.8" font-size="15.5" fill="#dedede" text-anchor="end" textLength="29.5" lengthAdjust="spacingAndGlyphs" stroke="#dedede" stroke-width="0.3">80%</text>
<text x="121.0" y="410.0" font-size="15.5" fill="#dedede" text-anchor="end" textLength="29.5" lengthAdjust="spacingAndGlyphs" stroke="#dedede" stroke-width="0.3">60%</text>
<text x="121.0" y="483.2" font-size="15.5" fill="#dedede" text-anchor="end" textLength="29.5" lengthAdjust="spacingAndGlyphs" stroke="#dedede" stroke-width="0.3">40%</text>
<text x="121.0" y="556.4" font-size="15.5" fill="#dedede" text-anchor="end" textLength="29.5" lengthAdjust="spacingAndGlyphs" stroke="#dedede" stroke-width="0.3">20%</text>
<text x="121.0" y="629.6" font-size="15.5" fill="#dedede" text-anchor="end" textLength="24.4" lengthAdjust="spacingAndGlyphs" stroke="#dedede" stroke-width="0.3">100</text>
<rect x="121.7" y="227.5" width="58.7" height="8.0" fill="#000"/>
<rect x="122.2" y="228.5" width="56.7" height="6.2" fill="url(#bg1)"/>
<rect x="121.7" y="236.2" width="64.9" height="8.0" fill="#000"/>
<rect x="122.2" y="237.2" width="62.9" height="6.2" fill="url(#bg2)"/>
<rect x="121.7" y="245.0" width="83.8" height="8.0" fill="#000"/>
<rect x="122.2" y="246.0" width="81.8" height="6.2" fill="url(#bg3)"/>
<rect x="121.7" y="253.8" width="56.8" height="8.0" fill="#000"/>
<rect x="122.2" y="254.8" width="54.8" height="6.2" fill="url(#bg4)"/>
<rect x="121.7" y="262.5" width="31.4" height="8.0" fill="#000"/>
<rect x="122.2" y="263.5" width="29.4" height="6.2" fill="url(#bg5)"/>
<rect x="121.7" y="271.2" width="22.2" height="8.0" fill="#000"/>
<rect x="122.2" y="272.2" width="20.2" height="6.2" fill="url(#bg6)"/>
<rect x="121.7" y="300.7" width="44.9" height="8.0" fill="#000"/>
<rect x="122.2" y="301.7" width="42.9" height="6.2" fill="url(#bg7)"/>
<rect x="121.7" y="309.4" width="53.6" height="8.0" fill="#000"/>
<rect x="122.2" y="310.4" width="51.6" height="6.2" fill="url(#bg8)"/>
<rect x="121.7" y="318.2" width="43.8" height="8.0" fill="#000"/>
<rect x="122.2" y="319.2" width="41.8" height="6.2" fill="url(#bg9)"/>
<rect x="121.7" y="326.9" width="50.1" height="8.0" fill="#000"/>
<rect x="122.2" y="327.9" width="48.1" height="6.2" fill="url(#bg10)"/>
<rect x="121.7" y="335.7" width="27.9" height="8.0" fill="#000"/>
<rect x="122.2" y="336.7" width="25.9" height="6.2" fill="url(#bg11)"/>
<rect x="121.7" y="344.4" width="12.0" height="8.0" fill="#000"/>
<rect x="122.2" y="345.4" width="10.0" height="6.2" fill="url(#bg12)"/>
<rect x="121.7" y="373.9" width="42.3" height="8.0" fill="#000"/>
<rect x="122.2" y="374.9" width="40.3" height="6.2" fill="url(#bg13)"/>
<rect x="121.7" y="382.6" width="48.6" height="8.0" fill="#000"/>
<rect x="122.2" y="383.6" width="46.6" height="6.2" fill="url(#bg14)"/>
<rect x="121.7" y="391.4" width="29.3" height="8.0" fill="#000"/>
<rect x="122.2" y="392.4" width="27.3" height="6.2" fill="url(#bg15)"/>
<rect x="121.7" y="400.1" width="35.8" height="8.0" fill="#000"/>
<rect x="122.2" y="401.1" width="33.8" height="6.2" fill="url(#bg16)"/>
<rect x="121.7" y="408.9" width="26.0" height="8.0" fill="#000"/>
<rect x="122.2" y="409.9" width="24.0" height="6.2" fill="url(#bg17)"/>
<rect x="121.7" y="417.6" width="10.3" height="8.0" fill="#000"/>
<rect x="122.2" y="418.6" width="8.3" height="6.2" fill="url(#bg18)"/>
<rect x="121.7" y="447.1" width="33.3" height="8.0" fill="#000"/>
<rect x="122.2" y="448.1" width="31.3" height="6.2" fill="url(#bg19)"/>
<rect x="121.7" y="455.9" width="35.8" height="8.0" fill="#000"/>
<rect x="122.2" y="456.9" width="33.8" height="6.2" fill="url(#bg20)"/>
<rect x="121.7" y="464.6" width="16.9" height="8.0" fill="#000"/>
<rect x="122.2" y="465.6" width="14.9" height="6.2" fill="url(#bg21)"/>
<rect x="121.7" y="473.4" width="29.3" height="8.0" fill="#000"/>
<rect x="122.2" y="474.4" width="27.3" height="6.2" fill="url(#bg22)"/>
<rect x="121.7" y="482.1" width="21.8" height="8.0" fill="#000"/>
<rect x="122.2" y="483.1" width="19.8" height="6.2" fill="url(#bg23)"/>
<rect x="121.7" y="490.9" width="10.3" height="8.0" fill="#000"/>
<rect x="122.2" y="491.9" width="8.3" height="6.2" fill="url(#bg24)"/>
<rect x="121.7" y="520.3" width="27.7" height="8.0" fill="#000"/>
<rect x="122.2" y="521.3" width="25.7" height="6.2" fill="url(#bg25)"/>
<rect x="121.7" y="529.0" width="29.3" height="8.0" fill="#000"/>
<rect x="122.2" y="530.0" width="27.3" height="6.2" fill="url(#bg26)"/>
<rect x="121.7" y="537.8" width="9.7" height="8.0" fill="#000"/>
<rect x="122.2" y="538.8" width="7.7" height="6.2" fill="url(#bg27)"/>
<rect x="121.7" y="546.5" width="20.1" height="8.0" fill="#000"/>
<rect x="122.2" y="547.5" width="18.1" height="6.2" fill="url(#bg28)"/>
<rect x="121.7" y="555.3" width="18.5" height="8.0" fill="#000"/>
<rect x="122.2" y="556.3" width="16.5" height="6.2" fill="url(#bg29)"/>
<rect x="121.7" y="564.0" width="3.8" height="8.0" fill="#000"/>
<rect x="122.2" y="565.0" width="1.8" height="6.2" fill="url(#bg30)"/>
<rect x="121.7" y="645.5" width="13.5" height="8.2" fill="#000"/>
<rect x="122.2" y="646.7" width="11.5" height="5.8" fill="url(#bg31)"/>
<text x="573.0" y="143.1" font-size="16" fill="#dedede" text-anchor="middle" textLength="47.4" lengthAdjust="spacingAndGlyphs" stroke="#dedede" stroke-width="0.3">Delta L</text>
<rect x="510.7" y="149.5" width="153.4" height="335.6" fill="#242424"/>
<line x1="503.0" y1="149.5" x2="664.1" y2="149.5" stroke="#a9a9a9" stroke-width="1.5"/>
<text x="503.5" y="154.8" font-size="15" fill="#dedede" text-anchor="end" stroke="#dedede" stroke-width="0.3">15</text>
<line x1="503.0" y1="205.4" x2="664.1" y2="205.4" stroke="#a9a9a9" stroke-width="1.5"/>
<text x="503.5" y="210.7" font-size="15" fill="#dedede" text-anchor="end" stroke="#dedede" stroke-width="0.3">10</text>
<line x1="503.0" y1="261.4" x2="664.1" y2="261.4" stroke="#a9a9a9" stroke-width="1.5"/>
<text x="503.5" y="266.7" font-size="15" fill="#dedede" text-anchor="end" stroke="#dedede" stroke-width="0.3">5</text>
<line x1="503.0" y1="317.3" x2="664.1" y2="317.3" stroke="#a9a9a9" stroke-width="1.5"/>
<text x="503.5" y="322.6" font-size="15" fill="#dedede" text-anchor="end" stroke="#dedede" stroke-width="0.3">0</text>
<line x1="503.0" y1="373.2" x2="664.1" y2="373.2" stroke="#a9a9a9" stroke-width="1.5"/>
<text x="503.5" y="378.5" font-size="15" fill="#dedede" text-anchor="end" stroke="#dedede" stroke-width="0.3">-5</text>
<line x1="503.0" y1="429.2" x2="664.1" y2="429.2" stroke="#a9a9a9" stroke-width="1.5"/>
<text x="503.5" y="434.5" font-size="15" fill="#dedede" text-anchor="end" stroke="#dedede" stroke-width="0.3">-10</text>
<line x1="503.0" y1="485.1" x2="664.1" y2="485.1" stroke="#a9a9a9" stroke-width="1.5"/>
<text x="503.5" y="490.4" font-size="15" fill="#dedede" text-anchor="end" stroke="#dedede" stroke-width="0.3">-15</text>
<line x1="510.7" y1="149.5" x2="510.7" y2="491.6" stroke="#a9a9a9" stroke-width="1.5"/>
<line x1="664.1" y1="149.5" x2="664.1" y2="491.6" stroke="#a9a9a9" stroke-width="1.5"/>
<text x="587.4" y="501.8" font-size="15" fill="#dedede" text-anchor="middle" textLength="37.5" lengthAdjust="spacingAndGlyphs" stroke="#dedede" stroke-width="0.3">100%</text>
<rect x="526.5" y="301.4" width="121.8" height="16.7" fill="#000"/>
<rect x="527.5" y="302.6" width="119.8" height="14.3" fill="url(#ylg0)"/>
<text x="782.9" y="143.1" font-size="16" fill="#dedede" text-anchor="middle" textLength="47.4" lengthAdjust="spacingAndGlyphs" stroke="#dedede" stroke-width="0.3">Delta C</text>
<rect x="720.6" y="149.5" width="153.5" height="335.6" fill="#242424"/>
<line x1="712.9" y1="149.5" x2="874.1" y2="149.5" stroke="#a9a9a9" stroke-width="1.5"/>
<text x="713.4" y="154.8" font-size="15" fill="#dedede" text-anchor="end" stroke="#dedede" stroke-width="0.3">15</text>
<line x1="712.9" y1="205.4" x2="874.1" y2="205.4" stroke="#a9a9a9" stroke-width="1.5"/>
<text x="713.4" y="210.7" font-size="15" fill="#dedede" text-anchor="end" stroke="#dedede" stroke-width="0.3">10</text>
<line x1="712.9" y1="261.4" x2="874.1" y2="261.4" stroke="#a9a9a9" stroke-width="1.5"/>
<text x="713.4" y="266.7" font-size="15" fill="#dedede" text-anchor="end" stroke="#dedede" stroke-width="0.3">5</text>
<line x1="712.9" y1="317.3" x2="874.1" y2="317.3" stroke="#a9a9a9" stroke-width="1.5"/>
<text x="713.4" y="322.6" font-size="15" fill="#dedede" text-anchor="end" stroke="#dedede" stroke-width="0.3">0</text>
<line x1="712.9" y1="373.2" x2="874.1" y2="373.2" stroke="#a9a9a9" stroke-width="1.5"/>
<text x="713.4" y="378.5" font-size="15" fill="#dedede" text-anchor="end" stroke="#dedede" stroke-width="0.3">-5</text>
<line x1="712.9" y1="429.2" x2="874.1" y2="429.2" stroke="#a9a9a9" stroke-width="1.5"/>
<text x="713.4" y="434.5" font-size="15" fill="#dedede" text-anchor="end" stroke="#dedede" stroke-width="0.3">-10</text>
<line x1="712.9" y1="485.1" x2="874.1" y2="485.1" stroke="#a9a9a9" stroke-width="1.5"/>
<text x="713.4" y="490.4" font-size="15" fill="#dedede" text-anchor="end" stroke="#dedede" stroke-width="0.3">-15</text>
<line x1="720.6" y1="149.5" x2="720.6" y2="491.6" stroke="#a9a9a9" stroke-width="1.5"/>
<line x1="874.1" y1="149.5" x2="874.1" y2="491.6" stroke="#a9a9a9" stroke-width="1.5"/>
<text x="797.4" y="501.8" font-size="15" fill="#dedede" text-anchor="middle" textLength="37.5" lengthAdjust="spacingAndGlyphs" stroke="#dedede" stroke-width="0.3">100%</text>
<rect x="736.4" y="316.5" width="121.9" height="10.0" fill="#000"/>
<rect x="737.4" y="317.7" width="119.9" height="7.6" fill="url(#ylg1)"/>
<text x="992.5" y="143.1" font-size="16" fill="#dedede" text-anchor="middle" textLength="51.0" lengthAdjust="spacingAndGlyphs" stroke="#dedede" stroke-width="0.3">Delta H</text>
<rect x="930.2" y="149.5" width="154.3" height="335.6" fill="#242424"/>
<line x1="922.5" y1="149.5" x2="1084.5" y2="149.5" stroke="#a9a9a9" stroke-width="1.5"/>
<text x="923.0" y="154.8" font-size="15" fill="#dedede" text-anchor="end" stroke="#dedede" stroke-width="0.3">15</text>
<line x1="922.5" y1="205.4" x2="1084.5" y2="205.4" stroke="#a9a9a9" stroke-width="1.5"/>
<text x="923.0" y="210.7" font-size="15" fill="#dedede" text-anchor="end" stroke="#dedede" stroke-width="0.3">10</text>
<line x1="922.5" y1="261.4" x2="1084.5" y2="261.4" stroke="#a9a9a9" stroke-width="1.5"/>
<text x="923.0" y="266.7" font-size="15" fill="#dedede" text-anchor="end" stroke="#dedede" stroke-width="0.3">5</text>
<line x1="922.5" y1="317.3" x2="1084.5" y2="317.3" stroke="#a9a9a9" stroke-width="1.5"/>
<text x="923.0" y="322.6" font-size="15" fill="#dedede" text-anchor="end" stroke="#dedede" stroke-width="0.3">0</text>
<line x1="922.5" y1="373.2" x2="1084.5" y2="373.2" stroke="#a9a9a9" stroke-width="1.5"/>
<text x="923.0" y="378.5" font-size="15" fill="#dedede" text-anchor="end" stroke="#dedede" stroke-width="0.3">-5</text>
<line x1="922.5" y1="429.2" x2="1084.5" y2="429.2" stroke="#a9a9a9" stroke-width="1.5"/>
<text x="923.0" y="434.5" font-size="15" fill="#dedede" text-anchor="end" stroke="#dedede" stroke-width="0.3">-10</text>
<line x1="922.5" y1="485.1" x2="1084.5" y2="485.1" stroke="#a9a9a9" stroke-width="1.5"/>
<text x="923.0" y="490.4" font-size="15" fill="#dedede" text-anchor="end" stroke="#dedede" stroke-width="0.3">-15</text>
<line x1="930.2" y1="149.5" x2="930.2" y2="491.6" stroke="#a9a9a9" stroke-width="1.5"/>
<line x1="1084.5" y1="149.5" x2="1084.5" y2="491.6" stroke="#a9a9a9" stroke-width="1.5"/>
<text x="1007.4" y="501.8" font-size="15" fill="#dedede" text-anchor="middle" textLength="37.5" lengthAdjust="spacingAndGlyphs" stroke="#dedede" stroke-width="0.3">100%</text>
<rect x="946.0" y="312.9" width="122.7" height="5.2" fill="#000"/>
<rect x="947.0" y="314.1" width="120.7" height="2.8" fill="url(#ylg2)"/>
<rect x="475.0" y="520.0" width="630.0" height="173.3" fill="#000"/>
<rect x="497.3" y="528.3" width="106.0" height="140.7" fill="#c2c1a0" stroke="#f4f4f4" stroke-width="1.6"/>
<text x="550.3" y="685.3" font-size="13" fill="#f0f0f0" text-anchor="middle" stroke="#f0f0f0" stroke-width="0.3">20%</text>
<rect x="621.0" y="528.3" width="106.0" height="140.7" fill="#c2c188" stroke="#f4f4f4" stroke-width="1.6"/>
<text x="674.0" y="685.3" font-size="13" fill="#f0f0f0" text-anchor="middle" stroke="#f0f0f0" stroke-width="0.3">40%</text>
<rect x="743.3" y="528.3" width="106.0" height="140.7" fill="#c3c162" stroke="#f4f4f4" stroke-width="1.6"/>
<text x="796.3" y="685.3" font-size="13" fill="#f0f0f0" text-anchor="middle" stroke="#f0f0f0" stroke-width="0.3">60%</text>
<rect x="866.0" y="528.3" width="106.0" height="140.7" fill="#c4be30" stroke="#f4f4f4" stroke-width="1.6"/>
<text x="919.0" y="685.3" font-size="13" fill="#f0f0f0" text-anchor="middle" stroke="#f0f0f0" stroke-width="0.3">80%</text>
<rect x="990.0" y="528.3" width="106.0" height="140.7" fill="#cac900" stroke="#f4f4f4" stroke-width="1.6"/>
<text x="1043.0" y="685.3" font-size="13" fill="#f0f0f0" text-anchor="middle" stroke="#f0f0f0" stroke-width="0.3">100%</text>
<text x="0" y="0" font-size="13" fill="#f0f0f0" text-anchor="middle" transform="translate(489.5,558.5) rotate(-90)">Actual</text>
<text x="0" y="0" font-size="13" fill="#f0f0f0" text-anchor="middle" transform="translate(489.5,638) rotate(-90)">Target</text>
<rect x="1116.3" y="118.5" width="731.5" height="586.1" fill="none" stroke="#c8c400" stroke-width="7.7"/>
<text x="1482.5" y="141.5" font-size="16" fill="#dedede" text-anchor="middle" textLength="80.0" lengthAdjust="spacingAndGlyphs" stroke="#dedede" stroke-width="0.3">CIE 1931 xy</text>
<text x="91.7" y="771.3" font-size="32" fill="#f2f2f2" textLength="233.3" lengthAdjust="spacingAndGlyphs" stroke="#f2f2f2" stroke-width="0.35">Current Reading</text>
<text x="91.7" y="815.6" font-size="25.5" fill="#f2f2f2" textLength="108.7" lengthAdjust="spacingAndGlyphs" stroke="#f2f2f2" stroke-width="0.35">x: 0,4369</text>
<text x="91.7" y="859.3" font-size="25.5" fill="#f2f2f2" textLength="109.5" lengthAdjust="spacingAndGlyphs" stroke="#f2f2f2" stroke-width="0.35">y: 0,5357</text>
<text x="91.7" y="903.0" font-size="25.5" fill="#f2f2f2" textLength="102.2" lengthAdjust="spacingAndGlyphs" stroke="#f2f2f2" stroke-width="0.35">fL: 96,95</text>
<text x="91.7" y="946.7" font-size="25.5" fill="#f2f2f2" textLength="60.7" lengthAdjust="spacingAndGlyphs" stroke="#f2f2f2" stroke-width="0.35">cd/m</text>
<text x="154.3" y="938.0" font-size="15" fill="#f2f2f2" textLength="10.5" lengthAdjust="spacingAndGlyphs" stroke="#f2f2f2" stroke-width="0.3">2</text>
<text x="165.0" y="946.7" font-size="25.5" fill="#f2f2f2" textLength="95.9" lengthAdjust="spacingAndGlyphs" stroke="#f2f2f2" stroke-width="0.35">: 332,17</text>
<text x="573.0" y="743.5" font-size="15" fill="#dedede" text-anchor="middle" textLength="88.0" lengthAdjust="spacingAndGlyphs" stroke="#dedede" stroke-width="0.3">RGB Balance</text>
<rect x="456.0" y="749.3" width="266.0" height="191.0" fill="#242424"/>
<line x1="456.0" y1="749.3" x2="722.0" y2="749.3" stroke="#a9a9a9" stroke-width="1.5"/>
<line x1="722.0" y1="749.3" x2="722.0" y2="946.3" stroke="#a9a9a9" stroke-width="1.5"/>
<line x1="450.0" y1="769.4" x2="722.0" y2="769.4" stroke="#a9a9a9" stroke-width="1.5"/>
<text x="450.0" y="774.4" font-size="15" fill="#dedede" text-anchor="end" stroke="#dedede" stroke-width="0.3">104</text>
<line x1="450.0" y1="807.8" x2="722.0" y2="807.8" stroke="#a9a9a9" stroke-width="1.5"/>
<text x="450.0" y="812.8" font-size="15" fill="#dedede" text-anchor="end" stroke="#dedede" stroke-width="0.3">102</text>
<line x1="450.0" y1="846.2" x2="722.0" y2="846.2" stroke="#a9a9a9" stroke-width="1.5"/>
<text x="450.0" y="851.2" font-size="15" fill="#dedede" text-anchor="end" stroke="#dedede" stroke-width="0.3">100</text>
<line x1="450.0" y1="884.6" x2="722.0" y2="884.6" stroke="#a9a9a9" stroke-width="1.5"/>
<text x="450.0" y="889.6" font-size="15" fill="#dedede" text-anchor="end" stroke="#dedede" stroke-width="0.3">98</text>
<line x1="450.0" y1="923.0" x2="722.0" y2="923.0" stroke="#a9a9a9" stroke-width="1.5"/>
<text x="450.0" y="928.0" font-size="15" fill="#dedede" text-anchor="end" stroke="#dedede" stroke-width="0.3">96</text>
<line x1="456.0" y1="749.3" x2="456.0" y2="946.3" stroke="#a9a9a9" stroke-width="1.5"/>
<line x1="456.0" y1="940.3" x2="722.0" y2="940.3" stroke="#a9a9a9" stroke-width="1.5"/>
<text x="589.0" y="958.0" font-size="15" fill="#dedede" text-anchor="middle" textLength="37.5" lengthAdjust="spacingAndGlyphs" stroke="#dedede" stroke-width="0.3">100%</text>
<rect x="481.5" y="820.6" width="69.9" height="119.7" fill="#000"/>
<rect x="483.0" y="822.3" width="66.9" height="118.0" fill="url(#rbr)"/>
<rect x="552.0" y="817.5" width="71.5" height="122.8" fill="#000"/>
<rect x="553.5" y="819.2" width="68.5" height="121.1" fill="url(#rbg)"/>
<rect x="623.4" y="826.4" width="70.6" height="113.9" fill="#000"/>
<rect x="624.9" y="828.1" width="67.6" height="112.2" fill="url(#rbb)"/>
<rect x="744.5" y="723.2" width="776.0" height="215.8" fill="#0c0c0c"/>
<rect x="746.5" y="725.0" width="772.0" height="31.0" fill="url(#thg)"/>
<text x="1008.7" y="748.5" font-size="19" fill="#f0f0f0" text-anchor="middle" textLength="43.2" lengthAdjust="spacingAndGlyphs" font-weight="bold">20%</text>
<text x="1121.5" y="748.5" font-size="19" fill="#f0f0f0" text-anchor="middle" textLength="43.2" lengthAdjust="spacingAndGlyphs" font-weight="bold">40%</text>
<text x="1235.0" y="748.5" font-size="19" fill="#f0f0f0" text-anchor="middle" textLength="43.2" lengthAdjust="spacingAndGlyphs" font-weight="bold">60%</text>
<text x="1348.0" y="748.5" font-size="19" fill="#f0f0f0" text-anchor="middle" textLength="43.2" lengthAdjust="spacingAndGlyphs" font-weight="bold">80%</text>
<text x="1461.0" y="748.5" font-size="19" fill="#f0f0f0" text-anchor="middle" textLength="54.3" lengthAdjust="spacingAndGlyphs" font-weight="bold">100%</text>
<rect x="746.5" y="756.0" width="772.0" height="30.5" fill="#404040"/>
<text x="764.7" y="778.5" font-size="19.5" fill="#f0f0f0" textLength="91.8" lengthAdjust="spacingAndGlyphs" font-weight="bold">x: CIE31</text>
<text x="959.0" y="778.5" font-size="19.5" fill="#f0f0f0" textLength="72.5" lengthAdjust="spacingAndGlyphs">0,3388</text>
<text x="1072.0" y="778.5" font-size="19.5" fill="#f0f0f0" textLength="72.5" lengthAdjust="spacingAndGlyphs">0,3633</text>
<text x="1185.0" y="778.5" font-size="19.5" fill="#f0f0f0" textLength="72.5" lengthAdjust="spacingAndGlyphs">0,3875</text>
<text x="1298.4" y="778.5" font-size="19.5" fill="#f0f0f0" textLength="72.5" lengthAdjust="spacingAndGlyphs">0,4122</text>
<text x="1411.5" y="778.5" font-size="19.5" fill="#f0f0f0" textLength="72.5" lengthAdjust="spacingAndGlyphs">0,4369</text>
<rect x="746.5" y="786.5" width="772.0" height="30.5" fill="#808080"/>
<text x="764.7" y="809.0" font-size="19.5" fill="#f0f0f0" textLength="90.5" lengthAdjust="spacingAndGlyphs" font-weight="bold">y: CIE31</text>
<text x="959.0" y="809.0" font-size="19.5" fill="#f0f0f0" textLength="72.5" lengthAdjust="spacingAndGlyphs">0,3722</text>
<text x="1072.0" y="809.0" font-size="19.5" fill="#f0f0f0" textLength="72.5" lengthAdjust="spacingAndGlyphs">0,4128</text>
<text x="1185.0" y="809.0" font-size="19.5" fill="#f0f0f0" textLength="72.5" lengthAdjust="spacingAndGlyphs">0,4526</text>
<text x="1298.4" y="809.0" font-size="19.5" fill="#f0f0f0" textLength="72.5" lengthAdjust="spacingAndGlyphs">0,4934</text>
<text x="1411.5" y="809.0" font-size="19.5" fill="#f0f0f0" textLength="72.5" lengthAdjust="spacingAndGlyphs">0,5357</text>
<rect x="746.5" y="817.0" width="772.0" height="30.5" fill="#404040"/>
<text x="764.7" y="839.5" font-size="19.5" fill="#f0f0f0" textLength="14.3" lengthAdjust="spacingAndGlyphs" font-weight="bold">Y</text>
<text x="959.0" y="839.5" font-size="19.5" fill="#f0f0f0" textLength="98.7" lengthAdjust="spacingAndGlyphs">338,9114</text>
<text x="1072.0" y="839.5" font-size="19.5" fill="#f0f0f0" textLength="98.7" lengthAdjust="spacingAndGlyphs">333,8762</text>
<text x="1185.0" y="839.5" font-size="19.5" fill="#f0f0f0" textLength="98.7" lengthAdjust="spacingAndGlyphs">330,3410</text>
<text x="1298.4" y="839.5" font-size="19.5" fill="#f0f0f0" textLength="98.7" lengthAdjust="spacingAndGlyphs">327,9915</text>
<text x="1411.5" y="839.5" font-size="19.5" fill="#f0f0f0" textLength="98.7" lengthAdjust="spacingAndGlyphs">332,1702</text>
<rect x="746.5" y="847.5" width="772.0" height="30.5" fill="#808080"/>
<text x="764.7" y="870.0" font-size="19.5" fill="#f0f0f0" textLength="166.6" lengthAdjust="spacingAndGlyphs" font-weight="bold">Target x:CIE31</text>
<text x="959.0" y="870.0" font-size="19.5" fill="#f0f0f0" textLength="72.5" lengthAdjust="spacingAndGlyphs">0,3386</text>
<text x="1072.0" y="870.0" font-size="19.5" fill="#f0f0f0" textLength="72.5" lengthAdjust="spacingAndGlyphs">0,3620</text>
<text x="1185.0" y="870.0" font-size="19.5" fill="#f0f0f0" textLength="72.5" lengthAdjust="spacingAndGlyphs">0,3865</text>
<text x="1298.4" y="870.0" font-size="19.5" fill="#f0f0f0" textLength="72.5" lengthAdjust="spacingAndGlyphs">0,4114</text>
<text x="1411.5" y="870.0" font-size="19.5" fill="#f0f0f0" textLength="72.5" lengthAdjust="spacingAndGlyphs">0,4378</text>
<rect x="746.5" y="878.0" width="772.0" height="30.5" fill="#404040"/>
<text x="764.7" y="900.5" font-size="19.5" fill="#f0f0f0" textLength="166.6" lengthAdjust="spacingAndGlyphs" font-weight="bold">Target y:CIE31</text>
<text x="959.0" y="900.5" font-size="19.5" fill="#f0f0f0" textLength="72.5" lengthAdjust="spacingAndGlyphs">0,3718</text>
<text x="1072.0" y="900.5" font-size="19.5" fill="#f0f0f0" textLength="72.5" lengthAdjust="spacingAndGlyphs">0,4105</text>
<text x="1185.0" y="900.5" font-size="19.5" fill="#f0f0f0" textLength="72.5" lengthAdjust="spacingAndGlyphs">0,4510</text>
<text x="1298.4" y="900.5" font-size="19.5" fill="#f0f0f0" textLength="72.5" lengthAdjust="spacingAndGlyphs">0,4922</text>
<text x="1411.5" y="900.5" font-size="19.5" fill="#f0f0f0" textLength="72.5" lengthAdjust="spacingAndGlyphs">0,5359</text>
<rect x="746.5" y="908.5" width="772.0" height="30.5" fill="#808080"/>
<text x="764.7" y="931.0" font-size="19.5" fill="#f0f0f0" textLength="96.7" lengthAdjust="spacingAndGlyphs" font-weight="bold">Target Y</text>
<text x="959.0" y="931.0" font-size="19.5" fill="#f0f0f0" textLength="98.7" lengthAdjust="spacingAndGlyphs">336,1491</text>
<text x="1072.0" y="931.0" font-size="19.5" fill="#f0f0f0" textLength="98.7" lengthAdjust="spacingAndGlyphs">330,1617</text>
<text x="1185.0" y="931.0" font-size="19.5" fill="#f0f0f0" textLength="98.7" lengthAdjust="spacingAndGlyphs">325,1641</text>
<text x="1298.4" y="931.0" font-size="19.5" fill="#f0f0f0" textLength="98.7" lengthAdjust="spacingAndGlyphs">321,0430</text>
<text x="1411.5" y="931.0" font-size="19.5" fill="#f0f0f0" textLength="98.7" lengthAdjust="spacingAndGlyphs">317,4502</text>
</svg>
<svg class="a" style="left:0;top:0" width="1920" height="1039">
<line x1="1151.0" y1="147.0" x2="1841.2" y2="147.0" stroke="#a9a9a9" stroke-width="1.5"/>
<line x1="1841.2" y1="147.0" x2="1841.2" y2="670.0" stroke="#a9a9a9" stroke-width="1.5"/>
<line x1="1151.0" y1="147.0" x2="1151.0" y2="670.0" stroke="#a9a9a9" stroke-width="1.5"/>
<line x1="1144.0" y1="670.0" x2="1841.2" y2="670.0" stroke="#a9a9a9" stroke-width="1.5"/>
<line x1="1151.0" y1="670.0" x2="1151.0" y2="676.6" stroke="#a9a9a9" stroke-width="1.5"/>
<text x="1151.0" y="693.4" font-size="15" fill="#dedede" stroke="#dedede" stroke-width="0.3" text-anchor="middle">0</text>
<line x1="1144.0" y1="670.0" x2="1151.0" y2="670.0" stroke="#a9a9a9" stroke-width="1.5"/>
<text x="1144.0" y="676.3" font-size="15" fill="#dedede" stroke="#dedede" stroke-width="0.3" text-anchor="end">0</text>
<line x1="1233.1" y1="670.0" x2="1233.1" y2="676.6" stroke="#a9a9a9" stroke-width="1.5"/>
<text x="1233.1" y="693.4" font-size="15" fill="#dedede" stroke="#dedede" stroke-width="0.3" text-anchor="middle">0,1</text>
<line x1="1144.0" y1="607.8" x2="1151.0" y2="607.8" stroke="#a9a9a9" stroke-width="1.5"/>
<text x="1144.0" y="614.1" font-size="15" fill="#dedede" stroke="#dedede" stroke-width="0.3" text-anchor="end">0,1</text>
<line x1="1315.2" y1="670.0" x2="1315.2" y2="676.6" stroke="#a9a9a9" stroke-width="1.5"/>
<text x="1315.2" y="693.4" font-size="15" fill="#dedede" stroke="#dedede" stroke-width="0.3" text-anchor="middle">0,2</text>
<line x1="1144.0" y1="545.5" x2="1151.0" y2="545.5" stroke="#a9a9a9" stroke-width="1.5"/>
<text x="1144.0" y="551.8" font-size="15" fill="#dedede" stroke="#dedede" stroke-width="0.3" text-anchor="end">0,2</text>
<line x1="1397.3" y1="670.0" x2="1397.3" y2="676.6" stroke="#a9a9a9" stroke-width="1.5"/>
<text x="1397.3" y="693.4" font-size="15" fill="#dedede" stroke="#dedede" stroke-width="0.3" text-anchor="middle">0,3</text>
<line x1="1144.0" y1="483.3" x2="1151.0" y2="483.3" stroke="#a9a9a9" stroke-width="1.5"/>
<text x="1144.0" y="489.6" font-size="15" fill="#dedede" stroke="#dedede" stroke-width="0.3" text-anchor="end">0,3</text>
<line x1="1479.4" y1="670.0" x2="1479.4" y2="676.6" stroke="#a9a9a9" stroke-width="1.5"/>
<text x="1479.4" y="693.4" font-size="15" fill="#dedede" stroke="#dedede" stroke-width="0.3" text-anchor="middle">0,4</text>
<line x1="1144.0" y1="421.0" x2="1151.0" y2="421.0" stroke="#a9a9a9" stroke-width="1.5"/>
<text x="1144.0" y="427.3" font-size="15" fill="#dedede" stroke="#dedede" stroke-width="0.3" text-anchor="end">0,4</text>
<line x1="1561.5" y1="670.0" x2="1561.5" y2="676.6" stroke="#a9a9a9" stroke-width="1.5"/>
<text x="1561.5" y="693.4" font-size="15" fill="#dedede" stroke="#dedede" stroke-width="0.3" text-anchor="middle">0,5</text>
<line x1="1144.0" y1="358.8" x2="1151.0" y2="358.8" stroke="#a9a9a9" stroke-width="1.5"/>
<text x="1144.0" y="365.1" font-size="15" fill="#dedede" stroke="#dedede" stroke-width="0.3" text-anchor="end">0,5</text>
<line x1="1643.6" y1="670.0" x2="1643.6" y2="676.6" stroke="#a9a9a9" stroke-width="1.5"/>
<text x="1643.6" y="693.4" font-size="15" fill="#dedede" stroke="#dedede" stroke-width="0.3" text-anchor="middle">0,6</text>
<line x1="1144.0" y1="296.6" x2="1151.0" y2="296.6" stroke="#a9a9a9" stroke-width="1.5"/>
<text x="1144.0" y="302.9" font-size="15" fill="#dedede" stroke="#dedede" stroke-width="0.3" text-anchor="end">0,6</text>
<line x1="1725.7" y1="670.0" x2="1725.7" y2="676.6" stroke="#a9a9a9" stroke-width="1.5"/>
<text x="1725.7" y="693.4" font-size="15" fill="#dedede" stroke="#dedede" stroke-width="0.3" text-anchor="middle">0,7</text>
<line x1="1144.0" y1="234.3" x2="1151.0" y2="234.3" stroke="#a9a9a9" stroke-width="1.5"/>
<text x="1144.0" y="240.6" font-size="15" fill="#dedede" stroke="#dedede" stroke-width="0.3" text-anchor="end">0,7</text>
<line x1="1807.8" y1="670.0" x2="1807.8" y2="676.6" stroke="#a9a9a9" stroke-width="1.5"/>
<text x="1807.8" y="693.4" font-size="15" fill="#dedede" stroke="#dedede" stroke-width="0.3" text-anchor="middle">0,8</text>
<line x1="1144.0" y1="172.1" x2="1151.0" y2="172.1" stroke="#a9a9a9" stroke-width="1.5"/>
<text x="1144.0" y="178.4" font-size="15" fill="#dedede" stroke="#dedede" stroke-width="0.3" text-anchor="end">0,8</text>
<rect x="1601.3" y="153.9" width="232.4" height="196.3" fill="none" stroke="#9a9a9a" stroke-width="2"/>
<rect x="1361.3" y="232.8" width="13.6" height="13.6" fill="rgba(255,255,255,0.06)" stroke="rgba(255,255,255,0.82)" stroke-width="2.2"/>
<rect x="1369.0" y="282.1" width="13.6" height="13.6" fill="rgba(255,255,255,0.06)" stroke="rgba(255,255,255,0.82)" stroke-width="2.2"/>
<rect x="1377.6" y="324.1" width="13.6" height="13.6" fill="rgba(255,255,255,0.06)" stroke="rgba(255,255,255,0.82)" stroke-width="2.2"/>
<rect x="1384.3" y="367.1" width="13.6" height="13.6" fill="rgba(255,255,255,0.06)" stroke="rgba(255,255,255,0.82)" stroke-width="2.2"/>
<rect x="1392.3" y="412.0" width="13.6" height="13.6" fill="rgba(255,255,255,0.06)" stroke="rgba(255,255,255,0.82)" stroke-width="2.2"/>
<rect x="1503.9" y="327.9" width="13.6" height="13.6" fill="rgba(255,255,255,0.06)" stroke="rgba(255,255,255,0.82)" stroke-width="2.2"/>
<rect x="1482.0" y="355.6" width="13.6" height="13.6" fill="rgba(255,255,255,0.06)" stroke="rgba(255,255,255,0.82)" stroke-width="2.2"/>
<rect x="1460.0" y="381.6" width="13.6" height="13.6" fill="rgba(255,255,255,0.06)" stroke="rgba(255,255,255,0.82)" stroke-width="2.2"/>
<rect x="1441.0" y="405.9" width="13.6" height="13.6" fill="rgba(255,255,255,0.06)" stroke="rgba(255,255,255,0.82)" stroke-width="2.2"/>
<rect x="1421.0" y="430.7" width="13.6" height="13.6" fill="rgba(255,255,255,0.06)" stroke="rgba(255,255,255,0.82)" stroke-width="2.2"/>
<rect x="1308.0" y="455.9" width="13.6" height="13.6" fill="rgba(255,255,255,0.06)" stroke="rgba(255,255,255,0.82)" stroke-width="2.2"/>
<rect x="1326.7" y="457.1" width="13.6" height="13.6" fill="rgba(255,255,255,0.06)" stroke="rgba(255,255,255,0.82)" stroke-width="2.2"/>
<rect x="1344.0" y="457.1" width="13.6" height="13.6" fill="rgba(255,255,255,0.06)" stroke="rgba(255,255,255,0.82)" stroke-width="2.2"/>
<rect x="1362.8" y="457.1" width="13.6" height="13.6" fill="rgba(255,255,255,0.06)" stroke="rgba(255,255,255,0.82)" stroke-width="2.2"/>
<rect x="1381.3" y="457.1" width="13.6" height="13.6" fill="rgba(255,255,255,0.06)" stroke="rgba(255,255,255,0.82)" stroke-width="2.2"/>
<rect x="1266.0" y="624.9" width="13.6" height="13.6" fill="rgba(255,255,255,0.06)" stroke="rgba(255,255,255,0.82)" stroke-width="2.2"/>
<rect x="1295.2" y="590.0" width="13.6" height="13.6" fill="rgba(255,255,255,0.06)" stroke="rgba(255,255,255,0.82)" stroke-width="2.2"/>
<rect x="1321.2" y="556.7" width="13.6" height="13.6" fill="rgba(255,255,255,0.06)" stroke="rgba(255,255,255,0.82)" stroke-width="2.2"/>
<rect x="1347.2" y="525.0" width="13.6" height="13.6" fill="rgba(255,255,255,0.06)" stroke="rgba(255,255,255,0.82)" stroke-width="2.2"/>
<rect x="1373.5" y="490.2" width="13.6" height="13.6" fill="rgba(255,255,255,0.06)" stroke="rgba(255,255,255,0.82)" stroke-width="2.2"/>
<rect x="1419.1" y="569.0" width="13.6" height="13.6" fill="rgba(255,255,255,0.06)" stroke="rgba(255,255,255,0.82)" stroke-width="2.2"/>
<rect x="1415.8" y="545.2" width="13.6" height="13.6" fill="rgba(255,255,255,0.06)" stroke="rgba(255,255,255,0.82)" stroke-width="2.2"/>
<rect x="1412.4" y="523.5" width="13.6" height="13.6" fill="rgba(255,255,255,0.06)" stroke="rgba(255,255,255,0.82)" stroke-width="2.2"/>
<rect x="1408.2" y="501.9" width="13.6" height="13.6" fill="rgba(255,255,255,0.06)" stroke="rgba(255,255,255,0.82)" stroke-width="2.2"/>
<rect x="1403.5" y="479.8" width="13.6" height="13.6" fill="rgba(255,255,255,0.06)" stroke="rgba(255,255,255,0.82)" stroke-width="2.2"/>
<rect x="1701.7" y="462.5" width="13.6" height="13.6" fill="rgba(255,255,255,0.06)" stroke="rgba(255,255,255,0.82)" stroke-width="2.2"/>
<rect x="1634.1" y="462.5" width="13.6" height="13.6" fill="rgba(255,255,255,0.06)" stroke="rgba(255,255,255,0.82)" stroke-width="2.2"/>
<rect x="1579.1" y="461.0" width="13.6" height="13.6" fill="rgba(255,255,255,0.06)" stroke="rgba(255,255,255,0.82)" stroke-width="2.2"/>
<rect x="1516.3" y="459.6" width="13.6" height="13.6" fill="rgba(255,255,255,0.06)" stroke="rgba(255,255,255,0.82)" stroke-width="2.2"/>
<rect x="1460.0" y="458.4" width="13.6" height="13.6" fill="rgba(255,255,255,0.06)" stroke="rgba(255,255,255,0.82)" stroke-width="2.2"/>
<circle cx="1345.2" cy="224.6" r="4.8" fill="rgba(40,200,40,0.75)" stroke="#151515" stroke-width="1.6"/>
<circle cx="1358.2" cy="278.6" r="4.8" fill="rgba(110,190,110,0.8)" stroke="#151515" stroke-width="1.6"/>
<circle cx="1370.1" cy="324.8" r="4.8" fill="rgba(130,180,130,0.8)" stroke="#151515" stroke-width="1.6"/>
<circle cx="1382.5" cy="371.2" r="4.8" fill="rgba(150,180,150,0.8)" stroke="#151515" stroke-width="1.6"/>
<circle cx="1394.7" cy="418.7" r="4.8" fill="rgba(165,180,165,0.85)" stroke="#151515" stroke-width="1.6"/>
<circle cx="1508.9" cy="336.5" r="4.8" fill="rgba(190,190,40,0.85)" stroke="#151515" stroke-width="1.6"/>
<circle cx="1488.8" cy="362.4" r="4.8" fill="rgba(190,190,110,0.85)" stroke="#151515" stroke-width="1.6"/>
<circle cx="1468.2" cy="386.7" r="4.8" fill="rgba(185,185,130,0.85)" stroke="#151515" stroke-width="1.6"/>
<circle cx="1447.8" cy="411.5" r="4.8" fill="rgba(180,180,150,0.85)" stroke="#151515" stroke-width="1.6"/>
<circle cx="1427.8" cy="437.5" r="4.8" fill="rgba(180,180,165,0.85)" stroke="#151515" stroke-width="1.6"/>
<circle cx="1298.9" cy="463.5" r="4.8" fill="rgba(30,170,170,0.8)" stroke="#151515" stroke-width="1.6"/>
<circle cx="1322.2" cy="463.5" r="4.8" fill="rgba(120,175,175,0.85)" stroke="#151515" stroke-width="1.6"/>
<circle cx="1343.7" cy="463.5" r="4.8" fill="rgba(145,175,175,0.85)" stroke="#151515" stroke-width="1.6"/>
<circle cx="1364.1" cy="463.5" r="4.8" fill="rgba(160,175,175,0.85)" stroke="#151515" stroke-width="1.6"/>
<circle cx="1385.8" cy="463.5" r="4.8" fill="rgba(170,175,175,0.85)" stroke="#151515" stroke-width="1.6"/>
<circle cx="1266.2" cy="641.5" r="4.8" fill="rgba(20,20,180,0.9)" stroke="#151515" stroke-width="1.6"/>
<circle cx="1295.9" cy="603.7" r="4.8" fill="rgba(100,100,190,0.9)" stroke="#151515" stroke-width="1.6"/>
<circle cx="1323.6" cy="569.3" r="4.8" fill="rgba(120,120,185,0.9)" stroke="#151515" stroke-width="1.6"/>
<circle cx="1351.1" cy="534.7" r="4.8" fill="rgba(140,140,180,0.9)" stroke="#151515" stroke-width="1.6"/>
<circle cx="1380.0" cy="498.2" r="4.8" fill="rgba(160,160,180,0.9)" stroke="#151515" stroke-width="1.6"/>
<circle cx="1435.1" cy="574.8" r="4.8" fill="rgba(170,40,170,0.85)" stroke="#151515" stroke-width="1.6"/>
<circle cx="1429.0" cy="553.4" r="4.8" fill="rgba(180,110,180,0.85)" stroke="#151515" stroke-width="1.6"/>
<circle cx="1423.3" cy="531.5" r="4.8" fill="rgba(185,140,185,0.85)" stroke="#151515" stroke-width="1.6"/>
<circle cx="1419.2" cy="508.4" r="4.8" fill="rgba(185,155,185,0.85)" stroke="#151515" stroke-width="1.6"/>
<circle cx="1413.2" cy="486.8" r="4.8" fill="rgba(185,170,185,0.85)" stroke="#151515" stroke-width="1.6"/>
<circle cx="1707.6" cy="469.3" r="4.8" fill="rgba(200,20,20,0.9)" stroke="#151515" stroke-width="1.6"/>
<circle cx="1646.1" cy="468.1" r="4.8" fill="rgba(190,90,90,0.85)" stroke="#151515" stroke-width="1.6"/>
<circle cx="1594.7" cy="468.1" r="4.8" fill="rgba(190,120,120,0.85)" stroke="#151515" stroke-width="1.6"/>
<circle cx="1532.3" cy="466.9" r="4.8" fill="rgba(190,140,140,0.85)" stroke="#151515" stroke-width="1.6"/>
<circle cx="1472.9" cy="465.2" r="4.8" fill="rgba(190,160,160,0.85)" stroke="#151515" stroke-width="1.6"/>
<rect x="1400.6" y="458.4" width="13.6" height="13.6" fill="rgba(255,255,255,0.2)" stroke="#000" stroke-width="2.2"/>
<circle cx="1407.7" cy="465.2" r="4.8" fill="#fff" stroke="#111" stroke-width="1.6"/>
<rect x="1701.7" y="462.5" width="13.6" height="13.6" fill="none" stroke="rgba(0,0,0,0.35)" stroke-width="0.8"/>
<rect x="1709.5" y="243.8" width="13.6" height="13.6" fill="rgba(255,255,255,0.12)" stroke="rgba(255,255,255,0.9)" stroke-width="2"/>
<circle cx="1711.6" cy="253.2" r="4.6" fill="rgba(190,190,40,0.85)" stroke="#111" stroke-width="1.6"/>
</svg>
<!-- bottom toolbar -->
<div class="a" style="left:0;top:969px;width:1920px;height:70px;background:linear-gradient(#474747,#2c2c2c)"></div>
<div class="a" style="left:0;top:969px;width:915px;height:70px;background:#2c2c2c"></div>
<div class="tb" style="left:1.2px;width:50.7px"></div>
<div class="a" style="left:17.8px;top:970.9px;width:17px;height:17px;border-radius:50%;background:linear-gradient(#5a5a5a,#8e8e8e)"></div>
<svg class="a" style="left:0;top:969px" width="60" height="70"><path d="M21.9 12.3 L31.9 12.3 L26.9 7.3 Z" fill="#2a2a2a"/></svg>
<div class="a" style="left:6.9px;top:998.1px;width:40px;height:33.8px;border-radius:4px;background:#ffff00;box-shadow:inset 0 0 0 1px #8a8a00"></div>
<div class="tb" style="left:58.8px;width:169.5px"><div class="tsw" style="background:#c2c3a0"></div><div class="tl">20%</div></div>
<div class="tb" style="left:230.3px;width:169.5px"><div class="tsw" style="background:#c2c289"></div><div class="tl">40%</div></div>
<div class="tb" style="left:402.0px;width:169.5px"><div class="tsw" style="background:#c3c163"></div><div class="tl">60%</div></div>
<div class="tb" style="left:573.6px;width:169.5px"><div class="tsw" style="background:#c4be38"></div><div class="tl">80%</div></div>
<div class="tb" style="left:745.0px;width:170px;background:linear-gradient(#1e1e1e,#2a2a2a 40%,#303030)"><div class="tsw" style="background:#c7c300;box-shadow:inset 0 0 0 1px rgba(40,40,0,0.6)"></div><div class="tl" style="color:#f4f4f4">100%</div></div>
<!-- right controls -->
<div class="a" style="left:1563.5px;top:968.7px;width:53.5px;height:70.3px;border-radius:4px 4px 0 0;background:linear-gradient(#a8a8a8,#7a7a7a 30%,#8a8a8a 31%,#6a6a6a)"></div>
<div class="a" style="left:1563.5px;top:989px;width:53.5px;height:1.5px;background:#5a5a5a"></div>
<div class="a" style="left:1581.5px;top:971.5px;width:17px;height:17px;border-radius:50%;background:linear-gradient(#6a6a6a,#9a9a9a)"></div>
<svg class="a" style="left:1563.5px;top:969px" width="54" height="70">
 <path d="M21.5 11 L31.5 11 L26.5 6.3 Z" fill="#2a2a2a"/>
 <rect x="11" y="28.5" width="32" height="32" rx="3" fill="#a8a8a8" stroke="#1a1a1a" stroke-width="2.6"/>
 <rect x="12.3" y="44.5" width="29.4" height="14.7" rx="2" fill="#969696"/>
 <rect x="18.3" y="35.7" width="17.6" height="17.4" fill="#000"/>
 <rect x="18.3" y="35.7" width="17.6" height="8.8" fill="#2a2a2a"/>
</svg>
<div class="rb" style="left:1619px;top:969px;width:51.5px;height:33px"></div>
<div class="rc" style="left:1631.0px;top:973px"></div>
<div class="rb" style="left:1672px;top:969px;width:49.5px;height:33px"></div>
<div class="rc" style="left:1684.0px;top:973px"></div>
<div class="rb" style="left:1723px;top:969px;width:49.5px;height:33px"></div>
<div class="rc" style="left:1735.0px;top:973px"></div>
<div class="rb" style="left:1774px;top:969px;width:48.5px;height:33px"></div>
<div class="rc" style="left:1786.0px;top:973px"></div>
<div class="rb" style="left:1824px;top:969px;width:48.5px;height:33px"></div>
<div class="rc" style="left:1836.0px;top:973px"></div>
<div class="a" style="left:1874px;top:969px;width:46px;height:33px;background:#2a2a2a"></div>
<div class="a" style="left:1886px;top:973px;width:26px;height:26px;border-radius:50%;background:#333"></div>
<div class="rb" style="left:1619px;top:1004px;width:152px;height:35px"></div>
<div class="rb" style="left:1773px;top:1004px;width:147px;height:35px"></div>
<div class="rc" style="left:1642px;top:1008px"></div>
<div class="rc" style="left:1881px;top:1008px"></div>
<svg class="a" style="left:1600px;top:960px" width="320" height="79">
 <rect x="39.6" y="21.2" width="9.6" height="9" fill="#2a2a2a"/>
 <path d="M92.6 20.2 L92.6 31.8 L103.2 26 Z" fill="#2a2a2a"/>
 <path d="M143.8 20.5 h-2.3 v11 h2.3 M151.8 20.5 h2.3 v11 h-2.3" fill="none" stroke="#2a2a2a" stroke-width="2.2"/>
 <circle cx="146" cy="26" r="1" fill="#2a2a2a"/><circle cx="149.5" cy="26" r="1" fill="#2a2a2a"/>
 <path d="M198.2 25.6 C195.5 22.5 190.8 22.5 190.8 25.6 C190.8 28.7 195.5 28.7 198.2 25.6 C200.9 22.5 205.6 22.5 205.6 25.6 C205.6 28.7 200.9 28.7 198.2 25.6 Z" fill="none" stroke="#2a2a2a" stroke-width="2.3"/>
 <path d="M242.6 24.5 A6.6 6.6 0 0 1 254.5 22.3" fill="none" stroke="#2a2a2a" stroke-width="2.6"/>
 <path d="M256.3 18.5 L256.8 25 L250.5 23.8 Z" fill="#2a2a2a"/>
 <path d="M255.6 27.5 A6.6 6.6 0 0 1 243.7 29.7" fill="none" stroke="#2a2a2a" stroke-width="2.6"/>
 <path d="M241.9 33.5 L241.4 27 L247.7 28.2 Z" fill="#2a2a2a"/>
 <path d="M53.3 1016.8 l-4.6 4.4 l4.6 4.4 M58.3 1016.8 l-4.6 4.4 l4.6 4.4" transform="translate(0,-960)" fill="none" stroke="#2a2a2a" stroke-width="2"/>
 <path d="M289.7 1016.8 l4.6 4.4 l-4.6 4.4 M294.7 1016.8 l4.6 4.4 l-4.6 4.4" transform="translate(0,-960)" fill="none" stroke="#2a2a2a" stroke-width="2"/>
 <text x="84" y="69.4" font-size="25" fill="#2a2a2a" textLength="56.8" lengthAdjust="spacingAndGlyphs" stroke="#2a2a2a" stroke-width="0.6">Back</text>
 <text x="204.8" y="69.4" font-size="25" fill="#2a2a2a" textLength="57.8" lengthAdjust="spacingAndGlyphs" stroke="#2a2a2a" stroke-width="0.6">Next</text>
</svg>
<script>
(function(){
var loc=[0.1741, 0.005, 0.17409, 0.005, 0.17407, 0.005, 0.17405, 0.00501, 0.17403, 0.00501, 0.174, 0.005, 0.17397, 0.00498, 0.17393, 0.00496, 0.17388, 0.00494, 0.17384, 0.00492, 0.1738, 0.0049, 0.17376, 0.0049, 0.17372, 0.0049, 0.17369, 0.0049, 0.17365, 0.0049, 0.1736, 0.0049, 0.17355, 0.00488, 0.17349, 0.00486, 0.17342, 0.00484, 0.17336, 0.00482, 0.1733, 0.0048, 0.17324, 0.00479, 0.17318, 0.00479, 0.17313, 0.0048, 0.17307, 0.0048, 0.173, 0.0048, 0.17293, 0.0048, 0.17285, 0.0048, 0.17277, 0.0048, 0.17269, 0.0048, 0.1726, 0.0048, 0.17251, 0.0048, 0.17242, 0.00479, 0.17232, 0.00478, 0.17221, 0.00478, 0.1721, 0.0048, 0.17198, 0.00483, 0.17185, 0.00488, 0.17172, 0.00494, 0.17157, 0.00501, 0.1714, 0.0051, 0.17121, 0.00521, 0.171, 0.00533, 0.17078, 0.00547, 0.17055, 0.00563, 0.1703, 0.0058, 0.17005, 0.00598, 0.16979, 0.00618, 0.16952, 0.0064, 0.16922, 0.00664, 0.1689, 0.0069, 0.16855, 0.00719, 0.16817, 0.00751, 0.16776, 0.00785, 0.16734, 0.00821, 0.1669, 0.0086, 0.16644, 0.00901, 0.16597, 0.00945, 0.16548, 0.00991, 0.16496, 0.01039, 0.1644, 0.0109, 0.16381, 0.01143, 0.1632, 0.01197, 0.16254, 0.01254, 0.16185, 0.01315, 0.1611, 0.0138, 0.16029, 0.0145, 0.15944, 0.01524, 0.15854, 0.01601, 0.15759, 0.01683, 0.1566, 0.0177, 0.15557, 0.0186, 0.15451, 0.01952, 0.15339, 0.0205, 0.15223, 0.02155, 0.151, 0.0227, 0.14971, 0.02392, 0.14837, 0.0252, 0.14698, 0.02657, 0.14552, 0.02806, 0.144, 0.0297, 0.14244, 0.03141, 0.14085, 0.03318, 0.13918, 0.03511, 0.13741, 0.03732, 0.1355, 0.0399, 0.13346, 0.04281, 0.1313, 0.04597, 0.12902, 0.04947, 0.12662, 0.05339, 0.1241, 0.0578, 0.12146, 0.06262, 0.11871, 0.06779, 0.11582, 0.07345, 0.11279, 0.07974, 0.1096, 0.0868, 0.10625, 0.09454, 0.10276, 0.10288, 0.09911, 0.11194, 0.0953, 0.12184, 0.0913, 0.1327, 0.08707, 0.14446, 0.0826, 0.15705, 0.078, 0.17055, 0.07333, 0.18506, 0.0687, 0.2007, 0.06406, 0.2175, 0.05936, 0.2354, 0.05465, 0.25433, 0.04998, 0.27422, 0.0454, 0.295, 0.04082, 0.31691, 0.03622, 0.34001, 0.03172, 0.36392, 0.02744, 0.38827, 0.0235, 0.4127, 0.01984, 0.43748, 0.01638, 0.46285, 0.01321, 0.48841, 0.01045, 0.51373, 0.0082, 0.5384, 0.00641, 0.56261, 0.005, 0.58664, 0.00406, 0.6102, 0.00367, 0.63301, 0.0039, 0.6548, 0.00474, 0.67576, 0.00615, 0.69608, 0.00813, 0.71547, 0.01071, 0.73361, 0.0139, 0.7502, 0.01777, 0.76535, 0.02232, 0.77926, 0.02743, 0.79177, 0.03299, 0.80274, 0.0389, 0.812, 0.04524, 0.81939, 0.0521, 0.82501, 0.05932, 0.82912, 0.06677, 0.83196, 0.0743, 0.8338, 0.08198, 0.83436, 0.08991, 0.83349, 0.09798, 0.83157, 0.10611, 0.829, 0.1142, 0.8262, 0.1223, 0.82302, 0.13047, 0.81919, 0.13864, 0.81492, 0.14674, 0.81042, 0.1547, 0.8059, 0.16251, 0.80134, 0.17022, 0.79661, 0.17784, 0.79173, 0.18539, 0.78672, 0.1929, 0.7816, 0.20034, 0.77638, 0.20771, 0.77103, 0.21503, 0.76556, 0.22232, 0.75998, 0.2296, 0.7543, 0.23688, 0.7485, 0.24414, 0.74259, 0.25137, 0.73657, 0.25859, 0.73047, 0.2658, 0.7243, 0.27299, 0.71805, 0.28015, 0.71171, 0.28731, 0.7053, 0.29445, 0.69882, 0.3016, 0.6923, 0.30874, 0.68573, 0.31588, 0.67909, 0.32302, 0.6724, 0.33016, 0.66567, 0.3373, 0.6589, 0.34446, 0.65209, 0.35162, 0.64524, 0.35879, 0.63834, 0.36595, 0.63143, 0.3731, 0.6245, 0.38024, 0.61755, 0.38736, 0.61058, 0.39448, 0.60358, 0.4016, 0.59659, 0.4087, 0.5896, 0.4158, 0.58261, 0.42291, 0.57562, 0.43, 0.56863, 0.43707, 0.56165, 0.4441, 0.5547, 0.4511, 0.54776, 0.45808, 0.54083, 0.46503, 0.53392, 0.47194, 0.52704, 0.4788, 0.5202, 0.48563, 0.5134, 0.49242, 0.50663, 0.49917, 0.4999, 0.50587, 0.49322, 0.5125, 0.4866, 0.51908, 0.48004, 0.52561, 0.47352, 0.53208, 0.46707, 0.53848, 0.46069, 0.5448, 0.4544, 0.55104, 0.44819, 0.55723, 0.44206, 0.56333, 0.436, 0.56932, 0.43005, 0.5752, 0.4242, 0.58097, 0.41844, 0.58665, 0.41276, 0.59221, 0.40719, 0.59763, 0.40176, 0.6029, 0.3965, 0.608, 0.39142, 0.61294, 0.38649, 0.61774, 0.38171, 0.62242, 0.37706, 0.627, 0.3725, 0.63148, 0.36804, 0.63586, 0.36367, 0.64012, 0.35943, 0.64424, 0.35534, 0.6482, 0.3514, 0.652, 0.34763, 0.65566, 0.34402, 0.65917, 0.34056, 0.66255, 0.33722, 0.6658, 0.334, 0.66892, 0.3309, 0.6719, 0.32792, 0.67475, 0.32506, 0.67748, 0.32232, 0.6801, 0.3197, 0.6826, 0.3172, 0.68498, 0.31482, 0.68724, 0.31255, 0.68941, 0.31038, 0.6915, 0.3083, 0.6935, 0.30632, 0.69539, 0.30445, 0.6972, 0.30266, 0.69893, 0.30095, 0.7006, 0.2993, 0.70219, 0.29771, 0.70371, 0.2962, 0.70515, 0.29475, 0.70655, 0.29336, 0.7079, 0.292, 0.70921, 0.29069, 0.71048, 0.28942, 0.7117, 0.2882, 0.71287, 0.28703, 0.714, 0.2859, 0.71509, 0.28481, 0.71613, 0.28377, 0.71712, 0.28277, 0.71808, 0.28181, 0.719, 0.2809, 0.71988, 0.28004, 0.72072, 0.27922, 0.72152, 0.27844, 0.72228, 0.2777, 0.723, 0.277, 0.72368, 0.27633, 0.72431, 0.2757, 0.7249, 0.27511, 0.72546, 0.27454, 0.726, 0.274, 0.72651, 0.27349, 0.727, 0.273, 0.72746, 0.27254, 0.72789, 0.27211, 0.7283, 0.2717, 0.72869, 0.27131, 0.72905, 0.27095, 0.72939, 0.27061, 0.72971, 0.27029, 0.73, 0.27, 0.73026, 0.26974, 0.73049, 0.26951, 0.7307, 0.2693, 0.7309, 0.2691, 0.7311, 0.2689, 0.7313, 0.2687, 0.73148, 0.26852, 0.73166, 0.26834, 0.73184, 0.26816, 0.732, 0.268, 0.73215, 0.26785, 0.73229, 0.26771, 0.73243, 0.26757, 0.73256, 0.26744, 0.7327, 0.2673, 0.73284, 0.26716, 0.73298, 0.26702, 0.73313, 0.26687, 0.73327, 0.26673, 0.7334, 0.2666, 0.73353, 0.26647, 0.73366, 0.26634, 0.73378, 0.26622, 0.73389, 0.26611, 0.734, 0.266, 0.7341, 0.2659, 0.73418, 0.26582, 0.73426, 0.26574, 0.73434, 0.26566, 0.7344, 0.2656, 0.73445, 0.26555, 0.7345, 0.2655, 0.73454, 0.26546, 0.73457, 0.26543, 0.7346, 0.2654, 0.73463, 0.26537, 0.73465, 0.26535, 0.73467, 0.26533, 0.73469, 0.26531, 0.7347, 0.2653];
var M=[[2.4934969,-0.9313836,-0.4027108],[-0.8294890,1.7626641,0.0236247],[0.0358458,-0.0761724,0.9568845]];
var GAM=1.0, DIM=0.62;
var S=[[3.2404542,-1.5371385,-0.4985314],[-0.9692660,1.8760108,0.0415560],[0.0556434,-0.2040259,1.0572252]];
function draw(id,W,H,x0,sx,y0,sy,offx,offy){
 var c=document.getElementById(id); if(!c||!c.getContext) return;
 var ctx=c.getContext('2d');
 ctx.fillStyle='#242424'; ctx.fillRect(0,0,W,H);
 var off=document.createElement('canvas'); off.width=W; off.height=H;
 var oc=off.getContext('2d'); var im=oc.createImageData(W,H); var d=im.data;
 function col(px,py,out){
  var x=(px-x0)/sx, y=(y0-py)/sy; if(y<1e-4)y=1e-4;
  var X=x/y, Y=1, Z=(1-x-y)/y;
  var r=M[0][0]*X+M[0][1]*Y+M[0][2]*Z, g=M[1][0]*X+M[1][1]*Y+M[1][2]*Z, b=M[2][0]*X+M[2][1]*Y+M[2][2]*Z;
  var ins=(r>=0&&g>=0&&b>=0);
  r=S[0][0]*X+S[0][1]*Y+S[0][2]*Z; g=S[1][0]*X+S[1][1]*Y+S[1][2]*Z; b=S[2][0]*X+S[2][1]*Y+S[2][2]*Z;
  if(r<0)r=0; if(g<0)g=0; if(b<0)b=0;
  var m=Math.max(r,g,b,1e-6); var k=(ins?1:DIM)*255/m;
  out[0]+=r*k; out[1]+=g*k; out[2]+=b*k;
 }
 var acc=[0,0,0];
 for(var j=0;j<H;j++){ for(var i=0;i<W;i++){
  acc[0]=acc[1]=acc[2]=0;
  var bx=i+offx, by=j+offy;
  col(bx+0.25,by+0.25,acc); col(bx+0.75,by+0.25,acc); col(bx+0.25,by+0.75,acc); col(bx+0.75,by+0.75,acc);
  var o=(j*W+i)*4;
  d[o]=acc[0]/4; d[o+1]=acc[1]/4; d[o+2]=acc[2]/4; d[o+3]=255;
 }}
 oc.putImageData(im,0,0);
 ctx.save(); ctx.beginPath();
 for(var n=0;n<loc.length;n+=2){ var qx=x0+loc[n]*sx-offx, qy=y0-loc[n+1]*sy-offy; if(n==0)ctx.moveTo(qx,qy); else ctx.lineTo(qx,qy); }
 ctx.closePath(); ctx.clip(); ctx.drawImage(off,0,0); ctx.restore();
}
draw('cie',691,524,1151.0,821.0,670.0,622.4,1151,147);
draw('ins',233,197,1601.3-0.4128*4648,4648,350.2+0.5109*3926,3926,1601,154);
})();
</script>
</body></html>
